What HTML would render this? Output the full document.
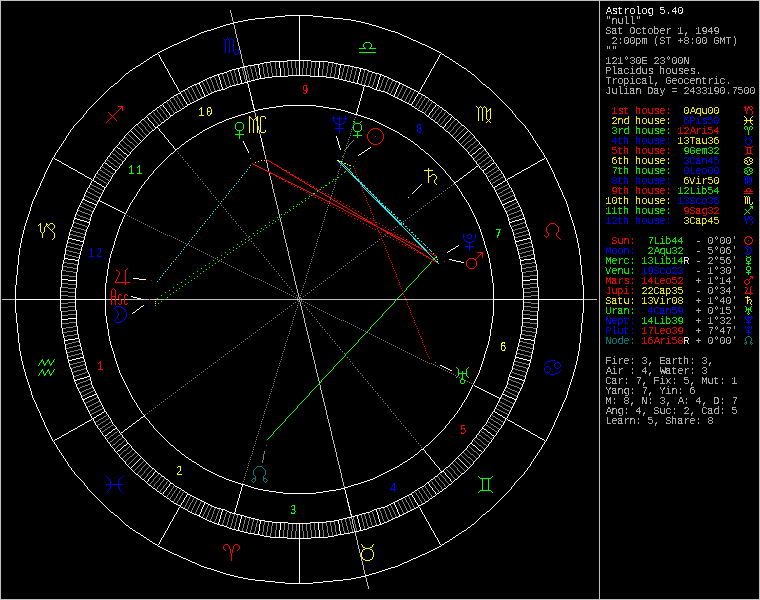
<!DOCTYPE html>
<html><head><meta charset="utf-8"><title>Astrolog 5.40 chart</title>
<style>html,body{margin:0;padding:0;background:#000;overflow:hidden}svg{display:block}
.t{font-family:"Liberation Mono",monospace;font-size:10.6px;white-space:pre}
.d{font-family:"Liberation Mono",monospace;font-size:13.2px}</style></head>
<body><svg width="760" height="600" viewBox="0 0 760 600">
<defs>
<filter id="twhite" x="0" y="0" width="760" height="600" filterUnits="userSpaceOnUse" color-interpolation-filters="sRGB"><feColorMatrix type="matrix" values="0 0 0 0 1 0 0 0 0 1 0 0 0 0 1 0 0 0 1 0"/><feComponentTransfer><feFuncA type="discrete" tableValues="0 0 .9 .9"/></feComponentTransfer></filter>
<filter id="tlite" x="0" y="0" width="760" height="600" filterUnits="userSpaceOnUse" color-interpolation-filters="sRGB"><feColorMatrix type="matrix" values="0 0 0 0 0.7529 0 0 0 0 0.7529 0 0 0 0 0.7529 0 0 0 1 0"/><feComponentTransfer><feFuncA type="discrete" tableValues="0 0 .9 .9"/></feComponentTransfer></filter>
<filter id="tred" x="0" y="0" width="760" height="600" filterUnits="userSpaceOnUse" color-interpolation-filters="sRGB"><feColorMatrix type="matrix" values="0 0 0 0 1 0 0 0 0 0 0 0 0 0 0 0 0 0 1 0"/><feComponentTransfer><feFuncA type="discrete" tableValues="0 0 .9 .9"/></feComponentTransfer></filter>
<filter id="tgreen" x="0" y="0" width="760" height="600" filterUnits="userSpaceOnUse" color-interpolation-filters="sRGB"><feColorMatrix type="matrix" values="0 0 0 0 0 0 0 0 0 1 0 0 0 0 0 0 0 0 1 0"/><feComponentTransfer><feFuncA type="discrete" tableValues="0 0 .9 .9"/></feComponentTransfer></filter>
<filter id="tyellow" x="0" y="0" width="760" height="600" filterUnits="userSpaceOnUse" color-interpolation-filters="sRGB"><feColorMatrix type="matrix" values="0 0 0 0 1 0 0 0 0 1 0 0 0 0 0 0 0 0 1 0"/><feComponentTransfer><feFuncA type="discrete" tableValues="0 0 .9 .9"/></feComponentTransfer></filter>
<filter id="tblue" x="0" y="0" width="760" height="600" filterUnits="userSpaceOnUse" color-interpolation-filters="sRGB"><feColorMatrix type="matrix" values="0 0 0 0 0 0 0 0 0 0 0 0 0 0 1 0 0 0 1 0"/><feComponentTransfer><feFuncA type="discrete" tableValues="0 0 .9 .9"/></feComponentTransfer></filter>
<filter id="tdkcyan" x="0" y="0" width="760" height="600" filterUnits="userSpaceOnUse" color-interpolation-filters="sRGB"><feColorMatrix type="matrix" values="0 0 0 0 0 0 0 0 0 0.502 0 0 0 0 0.502 0 0 0 1 0"/><feComponentTransfer><feFuncA type="discrete" tableValues="0 0 .9 .9"/></feComponentTransfer></filter>
<filter id="dred" x="0" y="0" width="760" height="600" filterUnits="userSpaceOnUse" color-interpolation-filters="sRGB"><feColorMatrix type="matrix" values="0 0 0 0 1 0 0 0 0 0 0 0 0 0 0 0 0 0 1 0"/><feComponentTransfer><feFuncA type="discrete" tableValues="0 0 1 1"/></feComponentTransfer></filter>
<filter id="dgreen" x="0" y="0" width="760" height="600" filterUnits="userSpaceOnUse" color-interpolation-filters="sRGB"><feColorMatrix type="matrix" values="0 0 0 0 0 0 0 0 0 1 0 0 0 0 0 0 0 0 1 0"/><feComponentTransfer><feFuncA type="discrete" tableValues="0 0 1 1"/></feComponentTransfer></filter>
<filter id="dyellow" x="0" y="0" width="760" height="600" filterUnits="userSpaceOnUse" color-interpolation-filters="sRGB"><feColorMatrix type="matrix" values="0 0 0 0 1 0 0 0 0 1 0 0 0 0 0 0 0 0 1 0"/><feComponentTransfer><feFuncA type="discrete" tableValues="0 0 1 1"/></feComponentTransfer></filter>
<filter id="dblue" x="0" y="0" width="760" height="600" filterUnits="userSpaceOnUse" color-interpolation-filters="sRGB"><feColorMatrix type="matrix" values="0 0 0 0 0 0 0 0 0 0 0 0 0 0 1 0 0 0 1 0"/><feComponentTransfer><feFuncA type="discrete" tableValues="0 0 1 1"/></feComponentTransfer></filter>
</defs>
<rect width="760" height="600" fill="#000"/>
<g fill="none" stroke-width="1" shape-rendering="crispEdges" transform="translate(0 .5)">
<path stroke="#ffffff" d="M285 15h28m-38 1h10m28 0h10m-58 1h10m48 0h10m-78 1h10m68 0h10m-95 1h7m88 0h8m-108 1h5m103 0h5m-118 1h5m113 0h5m-127 1h4m123 0h4m-135 1h4m131 0h4m-143 1h4m139 0h3m-149 1h3m146 0h4m-156 1h3m153 0h3m-162 1h3m159 0h3m-168 1h3m165 0h3m-174 1h3m171 0h3m-181 1h4m177 0h3m-187 1h3m184 0h4m-194 1h3m191 0h3m-199 1h2m197 0h2m-203 1h2m201 0h2m-207 1h2m205 0h2m-212 1h3m209 0h3m-217 1h2m215 0h2m-221 1h2m219 0h2m-225 1h2m223 0h2m-230 1h3m227 0h3m-235 1h2m233 0h2m-239 1h2m237 0h2m-243 1h2m241 0h2m-248 1h3m245 0h3m-253 1h2m251 0h2m-257 1h2m255 0h2m-261 1h2m259 0h2m-265 1h2m263 0h2m-269 1h2m267 0h2m-273 1h2m271 0h2m-277 1h2m275 0h2m-281 1h2m279 0h2m-286 2h2m285 0h2m-291 1h2m290 1h2m-297 1h2m295 0h2m-302 2h2m301 0h2m-165 1h24m-167 1h2m124 0h17m24 0h17m125 0h2m-191 1h6m58 0h6m-193 1h2m117 0h4m70 0h4m118 0h2m-204 1h6m78 0h6m-206 1h2m108 0h6m90 0h6m109 0h2m-325 1h2m106 0h4m102 0h4m-114 1h4m110 0h5m103 0h2m-331 1h2m101 0h4m119 0h4m101 0h2m-234 1h4m127 0h4m-237 1h2m97 0h3m135 0h2m-142 1h2m140 0h3m96 0h2m-246 1h3m145 0h3m-249 1h2m92 0h4m151 0h4m-162 1h3m159 0h3m90 0h2m-260 1h3m71 0h22m72 0h2m-172 1h2m58 0h16m22 0h16m58 0h3m-178 1h3m53 0h7m54 0h8m53 0h2m-182 1h2m50 0h6m69 0h5m50 0h2m-186 1h2m48 0h4m80 0h4m48 0h2m-190 1h2m46 0h4m88 0h4m46 0h2m-194 1h2m44 0h4m96 0h4m44 0h3m-199 1h2m43 0h4m103 0h4m43 0h2m-285 1h2m80 0h3m40 0h4m111 0h4m40 0h3m-208 1h3m39 0h4m119 0h3m40 0h2m79 0h2m-293 1h2m38 0h4m126 0h4m38 0h2m-295 1h2m77 0h2m37 0h3m134 0h4m36 0h2m-220 1h2m37 0h2m141 0h2m36 0h2m77 0h2m-264 1h2m145 0h2m36 0h2m-227 1h2m34 0h4m149 0h3m35 0h2m-231 1h2m32 0h4m156 0h4m33 0h2m-235 1h2m31 0h3m164 0h4m31 0h2m-206 1h2m171 0h2m-209 1h3m29 0h2m175 0h2m29 0h3m-245 1h2m30 0h2m179 0h2m30 0h2m-249 1h2m30 0h2m183 0h2m30 0h2m-221 1h2m187 0h2m-224 1h2m29 0h2m191 0h2m29 0h2m-228 1h2m195 0h2m-201 1h2m199 0h2m-234 1h2m27 0h2m203 0h2m27 0h2m-238 1h2m207 0h2m-241 1h2m26 0h2m211 0h2m26 0h2m-245 1h2m215 0h2m-222 1h3m219 0h3m-252 1h2m121 0h33m121 0h2m-254 1h2m89 0h7m33 0h7m89 0h2m-257 1h2m110 0h7m47 0h6m111 0h2m-260 1h2m79 0h6m60 0h7m79 0h2m-159 1h5m73 0h5m-188 1h2m24 0h2m73 0h4m83 0h4m73 0h2m24 0h2m-269 1h2m72 0h3m91 0h3m72 0h2m-247 1h2m71 0h3m97 0h3m71 0h2m-275 1h2m94 0h3m103 0h3m-113 1h4m109 0h4m91 0h2m-281 1h3m65 0h3m117 0h3m-126 1h3m123 0h3m63 0h2m-197 1h3m129 0h3m-138 1h3m135 0h3m-228 1h2m22 0h2m58 0h3m141 0h3m58 0h2m22 0h2m-233 1h2m147 0h2m-153 1h2m151 0h2m-215 1h2m55 0h3m155 0h2m56 0h2m-220 1h2m160 0h2m-245 1h2m77 0h2m164 0h2m-225 1h2m53 0h2m168 0h2m77 0h2m-253 1h2m172 0h2m53 0h2m-287 1h3m51 0h2m176 0h2m53 0h2m-237 1h2m180 0h2m-186 1h2m184 0h2m-241 1h2m49 0h2m188 0h2m0 1h2m49 0h2m-248 1h2m195 0h2m-202 2h2m201 0h2m-208 2h2m207 0h2m-213 1h2m211 0h2m-218 2h2m217 0h2m-224 2h2m223 0h2m-231 3h2m231 0h2m-299 4h2m57 0h2m189 0h2m109 0h2m-306 1h2m244 0h2m-58 1h2m-5 2h2m-240 1h2m45 0h2m253 0h2m45 0h2m-116 1h2m-234 1h2m341 0h2m-417 4h2m485 0h2m-487 1h2m481 0h2m-483 1h2m477 0h2m-478 2h2m41 0h2m385 0h2m41 0h2m-473 1h2m467 0h2m-469 1h2m463 0h2m-424 1h2m365 0h2m10 0h2m-421 1h2m457 0h2m-459 1h2m453 0h2m-455 1h2m38 0h2m357 0h2m10 0h2m38 0h2m-451 1h2m38 0h2m365 0h2m38 0h2m-446 2h2m388 0h2m49 0h2m-441 1h2m435 0h2m-437 1h2m431 0h2m-53 1h2m-381 1h2m425 0h2m-427 1h2m421 0h2m-423 1h2m369 0h2m46 0h2m-418 2h2m411 0h2m-413 1h2m360 0h2m45 0h2m-51 1h2m-359 1h2m401 0h2m-403 1h2m397 0h2m-398 2h2m391 0h2m-393 1h2m387 0h2m-413 12h3m429 0h3m-432 1h2m11 0h2m412 0h2m-427 1h2m11 0h2m407 0h3m-423 1h3m10 0h2m403 0h2m-417 1h2m10 0h2m399 0h2m-413 1h3m9 0h2m394 0h3m-397 1h2m0 1h2m0 1h2m0 1h2m0 1h2m0 1h2m0 1h2m0 1h2m0 1h2m-52 5h3m445 0h3m-448 1h3m439 0h3m-442 1h4m431 0h4m-435 1h3m425 0h3m-428 1h3m419 0h3m-444 16h4m455 0h4m-459 1h4m447 0h4m-451 1h4m439 0h4m-443 1h4m431 0h4m-63 5h2m-5 2h2m-4 1h2m-5 2h2m-386 7h4m463 0h4m-467 1h7m374 0h3m72 0h7m-456 1h4m373 0h4m64 0h4m-68 1h5m0 1h3m-331 16h6m-78 1h7m71 0h7m384 0h8m-470 1h9m445 0h8m-399 16h2m0 1h4m0 1h4m-126 1h91m35 0h3m349 0h91m-443 7h2m-6 3h2m-6 3h2m-67 6h9m445 0h8m-469 1h7m462 0h8m-463 19h4m441 0h4m-456 1h7m449 0h7m-467 1h4m463 0h4m-455 17h4m431 0h4m-443 1h4m439 0h4m-451 1h4m447 0h4m-459 1h4m455 0h4m-91 5h2m0 1h2m0 1h2m0 1h2m0 1h2m0 1h2m-365 6h3m419 0h3m-428 1h3m425 0h3m-435 1h4m431 0h4m-442 1h3m439 0h3m-448 1h3m445 0h3m-50 6h2m0 1h2m0 1h2m0 1h2m0 1h2m0 1h2m0 1h2m0 1h2m-397 1h3m394 0h2m9 0h3m-413 1h2m399 0h2m10 0h2m-418 1h3m403 0h2m10 0h2m-422 1h2m408 0h2m10 0h3m-427 1h2m412 0h2m11 0h2m-432 1h3m429 0h3m-413 12h2m387 0h2m-393 1h2m391 0h2m-398 2h2m397 0h2m-403 1h2m401 0h2m-359 1h2m-51 1h2m45 0h2m360 0h2m-413 1h2m411 0h2m-418 2h2m46 0h2m369 0h2m-423 1h2m421 0h2m-427 1h2m425 0h2m-381 1h2m-53 1h2m431 0h2m-437 1h2m435 0h2m-441 1h2m49 0h2m388 0h2m-446 2h2m38 0h2m365 0h2m38 0h2m-451 1h2m38 0h2m10 0h2m357 0h2m38 0h2m-455 1h2m453 0h2m-459 1h2m457 0h2m-421 1h2m10 0h2m365 0h2m-424 1h2m463 0h2m-469 1h2m467 0h2m-473 1h2m41 0h2m385 0h2m41 0h2m-478 2h2m477 0h2m-483 1h2m481 0h2m-487 1h2m485 0h2m-417 4h2m341 0h2m-348 2h2m45 0h2m253 0h2m45 0h2m-54 4h3m-306 1h2m57 0h2m300 0h2m-299 4h2m231 0h2m-231 3h2m223 0h2m-224 2h2m217 0h2m-218 2h2m211 0h2m-213 1h2m207 0h2m-208 2h2m201 0h2m-202 2h2m195 0h2m-4 1h2m49 0h2m-296 1h2m49 0h2m188 0h2m-190 1h2m184 0h2m-186 1h2m180 0h2m-236 1h2m52 0h2m176 0h2m52 0h3m-233 1h2m172 0h2m53 0h2m-284 1h2m53 0h2m168 0h2m77 0h2m-328 1h2m77 0h2m164 0h2m-166 1h2m160 0h2m-219 1h2m55 0h3m155 0h2m56 0h2m-215 1h2m151 0h2m-153 1h2m147 0h2m-233 1h2m22 0h2m58 0h3m141 0h3m58 0h2m22 0h2m-228 1h3m135 0h3m-138 1h3m129 0h3m-132 1h3m123 0h3m63 0h2m-259 1h3m65 0h3m117 0h3m-120 1h4m109 0h4m91 0h2m-302 1h2m94 0h3m103 0h3m-179 1h2m71 0h3m97 0h3m71 0h2m-247 1h2m72 0h3m91 0h3m72 0h2m-269 1h2m24 0h2m73 0h4m83 0h4m73 0h2m24 0h2m-188 1h5m73 0h5m-159 1h2m79 0h6m60 0h7m79 0h2m-260 1h2m110 0h7m47 0h6m111 0h2m-257 1h2m89 0h7m33 0h7m89 0h2m-254 1h2m121 0h33m121 0h2m-252 1h3m219 0h3m-222 1h2m215 0h2m-245 1h2m26 0h2m211 0h2m26 0h2m-241 1h2m207 0h2m-238 1h2m27 0h2m203 0h2m27 0h2m-234 1h2m199 0h2m-201 1h2m195 0h2m-228 1h2m29 0h2m191 0h2m29 0h2m-224 1h2m187 0h2m-221 1h2m30 0h2m183 0h2m30 0h2m-249 1h2m30 0h2m179 0h2m30 0h2m-245 1h3m29 0h2m175 0h2m29 0h3m-209 1h2m171 0h2m-206 1h2m31 0h3m164 0h4m31 0h2m-235 1h2m32 0h4m156 0h4m33 0h2m-231 1h2m34 0h4m149 0h3m35 0h2m-189 1h2m145 0h2m36 0h2m-224 1h2m37 0h2m141 0h2m36 0h2m77 0h2m-378 1h2m77 0h2m37 0h3m134 0h4m36 0h2m-216 1h2m38 0h4m126 0h4m38 0h2m-212 1h3m39 0h4m119 0h3m40 0h2m79 0h2m-370 1h2m80 0h3m40 0h4m111 0h4m40 0h3m-203 1h2m43 0h3m104 0h4m43 0h2m-199 1h2m44 0h4m96 0h4m44 0h3m-195 1h2m46 0h4m88 0h4m46 0h2m-190 1h2m48 0h4m80 0h4m48 0h2m-186 1h2m50 0h6m69 0h5m50 0h2m-182 1h3m53 0h7m54 0h8m53 0h2m-177 1h2m58 0h16m22 0h16m58 0h3m-173 1h3m71 0h22m72 0h2m-167 1h3m159 0h3m90 0h2m-348 1h2m92 0h4m151 0h4m-155 1h3m145 0h3m-148 1h2m140 0h3m96 0h2m-340 1h2m97 0h3m135 0h2m-137 1h4m127 0h4m-234 1h2m101 0h4m119 0h4m101 0h2m-226 1h4m110 0h5m103 0h2m-328 1h2m106 0h4m102 0h4m-216 1h2m108 0h6m90 0h6m109 0h2m-207 1h6m78 0h6m-203 1h2m117 0h4m70 0h4m118 0h2m-194 1h6m58 0h6m-190 1h2m124 0h17m24 0h17m125 0h2m-168 1h24m-164 1h2m301 0h2m-302 2h2m295 0h2m-4 1h2m-294 1h2m0 1h2m285 0h2m-286 2h2m279 0h2m-281 1h2m275 0h2m-277 1h2m271 0h2m-273 1h2m267 0h2m-269 1h2m263 0h2m-265 1h2m259 0h2m-261 1h2m255 0h2m-257 1h2m251 0h2m-253 1h3m245 0h3m-248 1h2m241 0h2m-243 1h2m237 0h2m-239 1h2m233 0h2m-235 1h3m227 0h3m-230 1h2m223 0h2m-225 1h2m219 0h2m-221 1h2m215 0h2m-217 1h3m209 0h3m-212 1h2m205 0h2m-207 1h2m201 0h2m-203 1h2m197 0h2m-199 1h3m191 0h3m-194 1h3m184 0h4m-188 1h4m177 0h3m-180 1h3m171 0h3m-174 1h3m165 0h3m-168 1h3m159 0h3m-162 1h3m153 0h3m-156 1h3m146 0h4m-150 1h4m139 0h3m-142 1h4m131 0h4m-135 1h4m123 0h4m-127 1h5m113 0h5m-118 1h5m103 0h5m-108 1h7m88 0h8m-96 1h10m68 0h10m-78 1h10m48 0h10m-58 1h10m28 0h10m-38 1h28"/>
<path stroke="#c0c0c0" d="M0 0h760m-758 299h13m91 0h5m1 0h3m1 0h3m2 0h3m1 0h16m3 0h5m1 0h5m1 0h8m1 0h134m1 0h96m1 0h96m91 0h13m-597 300h760"/>
<path stroke="#808080" d="M468 141h2m-340 1h2m339 2h2m-346 1h2m217 2h2m126 0h2m-352 1h2m353 5h2m-368 1h2m4 0h2m363 0h2m-376 3h2m375 0h2m-370 2h2m357 0h2m-373 1h2m5 0h2m367 0h2m5 0h2m-381 3h2m5 0h2m359 0h2m5 0h2m-373 3h2m365 0h2m-382 1h2m391 0h2m-392 2h2m385 0h2m-394 1h2m395 0h2m-391 1h2m379 0h2m-388 1h2m389 0h2m-385 1h2m373 0h2m-390 1h2m6 0h2m383 0h2m6 0h2m-400 2h2m6 0h2m377 0h2m6 0h2m-402 1h2m5 0h2m389 0h2m5 0h2m-404 2h2m5 0h2m383 0h2m5 0h2m-399 1h2m393 0h2m-394 2h2m387 0h2m-403 3h2m411 0h2m-413 1h2m407 0h2m-409 1h2m403 0h2m-413 1h2m6 0h2m399 0h2m6 0h2m-417 1h2m6 0h2m395 0h2m6 0h2m-4 1h2m-410 1h2m413 0h2m-424 1h2m7 0h2m401 0h2m6 0h2m-420 1h2m7 0h2m397 0h2m6 0h2m-416 1h2m410 0h2m-412 1h2m406 0h2m8 0h2m-428 1h2m8 0h2m402 0h2m8 0h2m-424 1h2m8 0h2m408 0h2m-420 1h2m414 0h2m-416 1h2m410 0h2m-412 1h2m406 0h2m-408 1h2m-15 2h2m429 0h2m-431 1h2m425 0h2m-427 1h2m421 0h2m-432 1h2m7 0h2m417 0h2m7 0h2m-437 1h2m7 0h2m413 0h2m7 0h2m-433 1h2m426 0h3m-429 1h3m421 0h2m-434 1h2m9 0h2m417 0h2m9 0h2m-441 1h2m9 0h2m413 0h2m9 0h2m-437 1h3m429 0h3m-432 1h3m423 0h3m-438 1h2m10 0h2m419 0h2m10 0h2m-445 1h2m439 0h2m-441 1h3m433 0h3m-436 1h3m427 0h3m-430 1h2m423 0h2m-425 1h2m419 0h2m-437 3h2m447 0h2m-449 1h3m441 0h3m-444 1h3m435 0h3m-438 1h3m429 0h3m-432 1h2m425 0h2m-440 1h3m445 0h3m-448 1h4m437 0h4m-441 1h3m431 0h3m-447 1h2m11 0h2m427 0h2m11 0h2m-455 1h3m447 0h3m-450 1h4m439 0h4m-443 1h3m433 0h3m-449 1h3m10 0h2m429 0h2m10 0h3m-456 1h4m445 0h4m-449 1h4m437 0h4m-441 1h3m431 0h3m-450 5h3m457 0h3m-460 1h4m449 0h4m-453 1h4m441 0h4m-445 1h3m435 0h3m-453 1h3m459 0h3m-462 1h4m451 0h4m-455 1h4m443 0h4m-447 1h3m437 0h3m-455 1h3m461 0h3m-464 1h4m453 0h4m-457 1h4m445 0h4m-449 1h3m439 0h3m-457 1h3m463 0h3m-466 1h4m455 0h4m-459 1h4m447 0h4m-451 1h3m441 0h3m-459 5h3m465 0h3m-468 1h7m451 0h7m-458 1h4m443 0h4m-462 2h4m465 0h4m-469 1h6m453 0h6m-459 1h4m445 0h4m-464 2h4m467 0h4m-471 1h7m453 0h7m-460 1h3m447 0h3m-464 3h7m461 0h7m-468 1h7m447 0h7m-468 7h6m462 0h7m-469 1h8m447 0h7m-469 3h7m462 0h8m-470 1h7m449 0h6m-469 3h7m463 0h7m-470 1h7m449 0h7m-470 3h7m463 0h7m-470 1h7m449 0h7m-463 6h7m449 0h7m-470 1h7m463 0h7m-470 3h7m449 0h7m-470 1h7m463 0h7m-470 3h8m447 0h7m-468 1h6m462 0h7m-469 3h8m447 0h7m-468 1h6m462 0h7m-468 7h7m447 0h7m-468 1h7m461 0h7m-464 3h4m445 0h4m-460 1h7m453 0h7m-470 1h3m467 0h3m-463 2h4m445 0h4m-459 1h6m453 0h6m-469 1h4m465 0h4m-462 2h4m443 0h4m-458 1h7m451 0h7m-468 1h3m465 0h3m-459 5h3m441 0h3m-451 1h4m447 0h4m-459 1h4m455 0h4m-465 1h2m463 0h2m-456 1h3m439 0h3m-449 1h4m445 0h4m-457 1h4m453 0h4m-464 1h3m461 0h3m-455 1h3m437 0h3m-447 1h4m443 0h4m-455 1h4m451 0h4m-462 1h3m459 0h3m-453 1h3m435 0h3m-445 1h4m441 0h4m-453 1h4m449 0h4m-460 1h3m457 0h3m-450 5h3m431 0h3m-441 1h4m437 0h4m-449 1h4m445 0h4m-456 1h3m10 0h2m429 0h2m10 0h3m-449 1h3m433 0h3m-443 1h4m439 0h4m-450 1h3m447 0h3m-455 1h2m11 0h2m427 0h2m11 0h2m-447 1h3m431 0h3m-441 1h4m437 0h4m-448 1h3m445 0h3m-440 1h2m425 0h2m-432 1h3m429 0h3m-438 1h3m435 0h3m-444 1h3m441 0h3m-449 1h2m447 0h2m-437 3h2m419 0h2m-425 1h2m423 0h2m-430 1h3m427 0h3m-436 1h3m433 0h3m-441 1h2m439 0h2m-433 1h2m419 0h2m-426 1h3m423 0h3m-432 1h3m429 0h3m-437 1h2m9 0h2m413 0h2m9 0h2m-441 1h2m9 0h2m417 0h2m9 0h2m-435 1h3m421 0h2m-428 1h2m426 0h3m-433 1h2m7 0h2m413 0h2m7 0h2m-437 1h2m7 0h2m417 0h2m7 0h2m-432 1h2m421 0h2m-427 1h2m425 0h2m-431 1h2m429 0h2m-420 2h2m-4 1h2m406 0h2m-412 1h2m410 0h2m-416 1h2m414 0h2m-420 1h2m8 0h2m408 0h2m-424 1h2m8 0h2m402 0h2m8 0h2m-418 1h2m406 0h2m8 0h2m-422 1h2m410 0h2m-416 1h2m7 0h2m397 0h2m6 0h2m-420 1h2m7 0h2m401 0h2m6 0h2m-415 1h2m413 0h2m-9 1h2m-413 1h2m6 0h2m395 0h2m6 0h2m-417 1h2m6 0h2m399 0h2m6 0h2m-413 1h2m403 0h2m-409 1h2m407 0h2m-413 1h2m411 0h2m-403 3h2m387 0h2m-394 2h2m393 0h2m-399 1h2m5 0h2m383 0h2m5 0h2m-404 2h2m5 0h2m389 0h2m5 0h2m-402 1h2m6 0h2m377 0h2m6 0h2m-400 2h2m6 0h2m383 0h2m6 0h2m-390 1h2m373 0h2m-385 1h2m389 0h2m-388 1h2m379 0h2m-391 1h2m395 0h2m-394 1h2m385 0h2m-392 2h2m391 0h2m-382 1h2m365 0h2m-373 3h2m5 0h2m359 0h2m5 0h2m-381 3h2m5 0h2m367 0h2m5 0h2m-373 1h2m357 0h2m-370 2h2m375 0h2m-376 3h2m4 0h2m363 0h2m-7 1h2m-357 5h2m348 1h2m-349 2h2m342 1h2m-343 2h2m336 1h2"/>
<path stroke="#ff0000" d="M118 106h5m627 0h2m-631 1h2m621 0h2m2 0h2m0 2h2m-379 19h5m-7 1h2m5 0h2m-9 14h2m5 0h2m-7 1h5m368 3h6m-6 6h6m-485 7h2m0 1h2m1 2h2m-21 1h2m19 0h2m-21 1h2m19 0h2m-21 1h2m18 0h2m-20 1h2m18 0h2m-20 1h2m0 1h2m17 0h2m-19 1h2m17 0h3m-20 1h2m0 1h2m16 0h3m-20 1h3m0 1h2m15 0h3m-18 1h2m15 0h2m-18 1h3m15 0h2m-17 1h2m14 0h2m-16 1h2m14 0h2m-17 1h3m0 1h2m13 0h2m-15 1h2m13 0h3m-17 1h3m0 1h2m12 0h2m-14 1h2m12 0h2m-14 1h2m0 1h2m11 0h2m-13 1h2m11 0h2m-13 1h2m444 0h3m-447 1h2m10 0h2m-12 1h2m0 1h2m435 0h4m1 0h4m-444 1h2m9 0h2m-11 1h2m9 0h2m420 0h9m-440 1h2m0 1h2m8 0h2m-10 1h2m8 0h2m-10 1h2m0 1h2m7 0h2m-9 1h2m0 1h2m6 0h2m-8 1h2m6 0h2m-8 1h2m0 1h2m5 0h2m-7 1h2m5 0h2m-7 1h2m0 1h2m4 0h2m-6 1h2m4 0h2m-6 1h2m5 1h2m-6 1h2m4 0h2m-6 1h2m0 1h2m3 0h2m-5 1h2m3 0h2m-5 1h2m0 1h2m2 0h2m-4 1h2m2 0h2m-4 1h2m0 1h2m1 0h2m-3 1h2m1 0h2m-3 1h2m7 0h2m-9 1h4m-2 1h4m3 0h2m-7 1h3m177 0h5m-183 1h3m-1 1h2m0 1h2m0 1h2m0 1h2m-1 1h3m-1 1h3m-1 1h3m-2 1h4m-2 1h4m0 1h2m-3 1h2m1 0h2m-3 1h2m1 0h2m349 0h3m-352 1h2m345 0h2m3 0h2m-356 1h2m2 0h2m-4 1h2m2 0h2m0 1h2m-5 1h2m3 0h2m-5 1h2m3 0h2m0 1h2m333 0h2m3 0h2m-346 1h2m4 0h2m333 0h3m-342 1h2m4 0h2m0 1h3m-8 1h2m5 0h2m-7 1h2m5 0h2m0 1h2m-8 1h2m1 2h2m7 0h2m47 0h6m-63 1h3m7 0h2m49 0h2m-51 1h2m-11 1h3m8 0h2m-10 1h2m1 2h2m38 0h5m-43 1h2m41 0h2m-44 1h2m0 1h2m33 7h5m-358 2h2m632 6h3m-2 1h2m-7 2h2m-633 3h15m616 2h2m-3 3h2m-2 6h8m-634 1h2m4 0h2m-16 2h5m3 3h2m-2 5h2m4 0h2m98 240h3m7 0h3"/>
<path stroke="#00ff00" d="M365 42h5m-11 6h7m3 0h7m-17 4h17m-139 70h5m113 1h5m385 3h2m3 0h2m-515 4h5m113 1h5m-125 3h9m109 1h9m385 32h3m-5 1h2m3 0h2m-7 2h2m3 1h2m-7 2h2m3 0h2m-5 1h3m-413 3h2m-14 8h2m-14 8h2m435 13h3m-2 1h2m-6 50h3m-3 4h3m-4 2h5m-4 3h3m-3 4h3m-4 2h5m-5 37h5m-710 51h2m4 0h2m-5 4h2m4 0h2m-11 6h2m4 0h2m409 3h9m-423 1h2m4 0h2m409 5h3m-3 4h3m16 95h11m-11 12h11"/>
<path stroke="#ffff00" d="M489 109h2m-5 2h2m-227 5h4m-16 1h2m5 0h2m486 3h9m-492 12h4m482 25h3m-5 1h2m3 0h2m-415 2h2m406 0h2m3 1h2m-408 2h2m399 0h2m3 0h2m-5 1h3m-401 1h2m73 5h9m-1 4h3m-7 2h3m319 28h2m-702 19h3m-14 1h2m5 0h2m697 73h5m-1 2h2m-4 1h2m-386 247h2m5 0h2m-7 1h5m-7 1h2m5 0h2m-9 10h2m5 0h2m-7 1h5"/>
<path stroke="#0000ff" d="M237 50h3m-5 4h2m95 64h3m2 0h5m2 0h3m-12 5h2m5 0h2m-7 1h5m-7 4h9m403 10h3m-3 6h3m-1 34h3m-2 38h2m-8 1h2m2 0h2m0 2h2m-284 15h3m-3 4h3m-6 3h2m5 0h2m-7 1h5m-7 4h9m272 0h3m0 1h2m-2 6h2m-5 1h3m-633 52h5m0 1h2m621 10h2m1 0h3m1 0h2m-6 3h3m-629 1h2m-7 1h5m625 0h5m-4 8h3m-4 2h5m-201 28h5m-8 1h3m6 1h3m-13 4h3m7 2h3m-13 4h3m6 1h3m-8 1h5m-449 110h17"/>
<path stroke="#00ffff" d="M351 174h2m-1 1h2m-1 1h3m-2 1h2m-1 1h2m-1 1h3m-2 1h2m-1 1h2m0 1h2m-2 1h2m-1 1h2m-1 1h3m1 3h2m1 3h2m1 3h2m1 3h2m-1 3h2m-1 1h3m-2 1h2m-1 1h4m-3 1h2m-1 1h3m-2 1h2m-1 1h3m-2 1h2m-1 1h2m-1 1h2m-1 1h2m-1 1h2m-1 1h2m-1 1h2m1 0h2m-4 1h2m-1 1h2m-1 1h2m-1 1h2m-1 1h2m-1 1h2m1 0h2m-4 1h2m-1 1h2m-1 1h2m-1 1h2m3 2h2m4 6h2m0 6h2m2 0h2m-5 1h2m-1 1h2m-1 1h2m-1 1h2m-1 1h2m-1 1h2m-1 1h2m-1 1h2m-1 1h2m-1 1h2m-1 1h2m-1 1h2"/>
<path stroke="#008080" d="M747 336h3m-5 6h2m3 0h2m-495 124h5m-9 12h3m7 0h3"/>
</g>
<g fill="none" stroke-width="1" shape-rendering="crispEdges" transform="translate(.5 0)">
<path stroke="#ffffff" d="M15 285v14m0 1v13m1-38v10m0 28v10m1-58v10m0 48v10m1-78v10m0 68v10m1-95v7m0 88v8m1-108v5m0 103v5m1-118v5m0 113v5m1-127v4m0 123v4m1-135v4m0 131v4m1-143v4m0 139v3m1-149v3m0 146v4m1-156v3m0 153v3m1-162v3m0 159v3m1-168v3m0 165v3m1-174v3m0 171v3m1-181v4m0 177v3m1-187v3m0 184v4m1-194v3m0 191v3m1-199v2m0 197v2m1-203v2m0 201v2m1-207v2m0 205v2m1-212v3m0 209v3m1-217v2m0 215v2m1-221v2m0 219v2m1-225v2m0 223v2m1-230v3m0 227v3m1-235v2m0 233v2m1-239v2m0 237v2m1-243v2m0 241v2m1-248v3m0 245v3m1-253v2m0 251v2m1-257v2m0 255v2m1-261v2m0 259v2m1-265v2m0 263v2m1-269v2m0 267v2m1-273v2m0 271v2m1-277v2m0 275v2m1-281v2m0 279v2m1-284v1m0 283v1m1-287v2m0 1v1m0 281v1m0 1v2m1-291v2m0 289v1m1-293v1m0 292v2m1-297v2m0 295v2m1-300v1m0 299v1m1-303v2m0 301v2m1-306v1m0 140v12m0 1v11m0 141v1m1-309v2m0 16v1m0 107v9m0 1v7m0 24v8m0 1v8m0 108v1m0 16v2m1-312v1m0 120v6m0 58v6m0 121v1m1-315v2m0 117v4m0 70v4m0 118v2m1-318v1m0 113v4m0 1v1m0 78v2m0 1v3m0 114v1m1-321v2m0 108v6m0 90v6m0 109v2m1-325v2m0 106v4m0 102v4m0 107v1m1-327v1m0 104v4m0 110v5m0 103v2m1-331v2m0 31v1m0 69v2m0 1v1m0 119v1m0 1v2m0 69v1m0 31v2m1-334v1m0 99v4m0 127v4m0 99v1m1-337v2m0 97v3m0 135v2m0 98v1m1-339v1m0 97v2m0 140v3m0 96v2m1-342v1m0 95v3m0 145v3m0 95v1m1-345v2m0 92v4m0 151v4m0 92v1m1-347v1m0 91v1m0 1v1m0 159v1m0 1v1m0 90v2m1-350v1m0 89v3m0 71v11m0 1v10m0 72v2m0 90v1m1-352v1m0 88v2m0 58v8m0 1v7m0 22v8m0 1v7m0 58v3m0 88v1m1-354v1m0 48v1m0 37v3m0 53v7m0 54v8m0 53v2m0 38v1m0 48v1m1-356v1m0 85v2m0 50v1m0 1v4m0 69v4m0 51v2m0 86v1m1-358v1m0 84v2m0 48v4m0 80v4m0 48v2m0 85v1m1-360v1m0 83v2m0 46v4m0 88v4m0 46v2m0 84v1m1-362v1m0 82v2m0 44v4m0 96v4m0 44v3m0 82v1m1-364v1m0 82v1m0 43v3m0 104v4m0 43v1m0 82v1m1-367v2m0 80v2m0 41v1m0 1v2m0 111v2m0 1v1m0 41v2m0 80v1m1-369v1m0 60v1m0 18v3m0 39v4m0 119v3m0 40v2m0 19v1m0 59v2m1-372v1m0 78v2m0 38v4m0 126v4m0 38v2m0 79v1m1-375v2m0 77v2m0 37v3m0 134v4m0 36v2m0 78v1m1-377v1m0 77v2m0 37v2m0 141v2m0 36v2m0 77v2m1-380v1m0 77v1m0 37v2m0 145v2m0 36v2m0 77v1m1-382v1m0 76v2m0 34v1m0 1v2m0 149v2m0 36v2m0 76v1m1-384v1m0 75v2m0 32v4m0 156v4m0 33v2m0 75v1m1-386v1m0 72v1m0 1v2m0 31v3m0 164v4m0 31v2m0 1v1m0 72v1m1-388v1m0 106v2m0 171v2m0 106v1m1-390v1m0 73v2m0 30v2m0 175v2m0 30v2m0 73v1m1-392v1m0 72v2m0 30v2m0 179v2m0 30v2m0 72v1m1-394v1m0 71v2m0 30v2m0 183v2m0 30v2m0 71v1m1-396v1m0 71v1m0 8v1m0 22v1m0 187v1m0 22v1m0 8v1m0 71v1m1-398v1m0 70v2m0 29v2m0 191v2m0 29v2m0 70v1m1-400v1m0 70v1m0 30v1m0 195v2m0 29v1m0 70v1m1-402v1m0 70v1m0 28v2m0 199v2m0 28v1m0 70v1m1-404v1m0 69v2m0 27v2m0 203v2m0 27v2m0 69v1m1-406v1m0 69v1m0 18v1m0 8v2m0 207v2m0 8v1m0 18v1m0 69v1m1-408v1m0 68v2m0 26v2m0 211v2m0 26v2m0 68v1m1-410v1m0 68v1m0 26v2m0 215v2m0 26v1m0 68v1m1-412v1m0 68v1m0 25v2m0 219v2m0 25v1m0 68v1m1-414v1m0 67v2m0 121v16m0 1v16m0 121v2m0 67v1m1-416v1m0 67v1m0 25v2m0 89v7m0 33v7m0 89v2m0 25v1m0 67v1m1-418v1m0 66v2m0 5v1m0 19v1m0 84v7m0 47v6m0 85v1m0 19v1m0 5v2m0 66v1m1-420v1m0 66v1m0 8v1m0 16v2m0 79v6m0 60v7m0 79v2m0 16v1m0 8v1m0 66v1m1-422v1m0 66v1m0 25v1m0 76v5m0 73v5m0 76v1m0 25v1m0 66v1m1-424v1m0 65v2m0 24v2m0 73v4m0 83v4m0 73v2m0 24v2m0 65v1m1-360v1m0 14v1m0 9v2m0 72v3m0 91v3m0 72v2m0 9v1m0 14v1m1-296v1m0 16v1m0 6v2m0 71v3m0 97v3m0 71v2m0 6v1m0 16v1m1-363v1m0 63v2m0 23v1m0 70v3m0 103v3m0 70v1m0 23v1m0 64v1m1-430v1m0 63v1m0 24v1m0 67v4m0 109v4m0 67v1m0 23v2m0 63v1m1-368v1m0 23v2m0 65v3m0 117v3m0 65v1m0 24v1m1-306v1m0 88v3m0 123v3m0 63v1m0 24v1m1-371v1m0 62v1m0 1v1m0 21v1m0 62v3m0 129v3m0 62v1m0 21v1m0 1v1m0 62v1m1-436v1m0 62v1m0 23v1m0 60v3m0 135v3m0 60v1m0 23v1m0 62v1m1-438v1m0 61v2m0 22v2m0 58v3m0 141v3m0 58v2m0 22v2m0 61v1m1-440v1m0 61v1m0 7v1m0 15v1m0 58v2m0 147v2m0 58v1m0 15v1m0 7v1m0 61v1m1-442v1m0 61v1m0 9v1m0 13v1m0 57v2m0 151v2m0 57v1m0 13v1m0 9v1m0 61v1m1-444v1m0 61v1m0 11v1m0 10v2m0 55v3m0 155v2m0 56v2m0 10v1m0 11v1m0 61v1m1-446v1m0 61v1m0 13v1m0 8v1m0 55v2m0 160v2m0 50v1m0 5v1m0 8v1m0 13v1m0 61v1m1-448v1m0 60v2m0 22v1m0 54v2m0 164v2m0 47v1m0 7v1m0 22v1m0 61v1m1-450v1m0 60v1m0 22v2m0 223v2m0 54v1m0 22v2m0 60v1m1-391v1m0 19v1m0 2v1m0 53v2m0 172v2m0 53v2m0 2v1m0 19v1m1-332v1m0 22v1m0 52v2m0 176v2m0 39v1m0 13v1m0 22v1m1-394v1m0 59v1m0 74v2m0 180v2m0 36v1m0 38v1m0 59v1m1-456v1m0 59v1m0 22v1m0 50v2m0 184v2m0 51v1m0 22v1m0 59v1m1-398v1m0 21v2m0 49v2m0 188v2m0 50v1m0 22v1m1-340v1m0 1v1m0 19v1m0 50v1m0 192v2m0 28v1m0 20v2m0 19v1m0 1v1m1-401v1m0 58v1m0 3v1m0 17v1m0 49v2m0 111v1m0 83v2m0 25v1m0 23v1m0 17v1m0 3v1m0 58v1m1-403v1m0 5v1m0 15v1m0 49v1m0 199v1m0 49v1m0 15v1m0 5v1m1-346v1m0 7v1m0 13v1m0 48v2m0 201v2m0 48v1m0 13v1m0 7v1m1-406v1m0 57v1m0 9v1m0 11v1m0 48v1m0 114v1m0 90v1m0 19v1m0 28v1m0 11v1m0 9v1m0 57v1m1-396v1m0 9v1m0 47v2m0 114v1m0 92v2m0 16v1m0 30v1m0 9v1m1-326v1m0 7v1m0 46v2m0 211v2m0 46v1m0 7v1m1-339v1m0 14v1m0 5v1m0 46v1m0 215v1m0 46v1m0 5v1m0 14v1m1-354v1m0 16v1m0 3v1m0 45v2m0 117v1m0 99v2m0 9v1m0 35v1m0 3v1m0 16v1m1-413v1m0 56v1m0 18v1m0 1v1m0 45v1m0 118v1m0 102v1m0 7v1m0 37v1m0 1v1m0 18v1m0 56v1m1-415v1m0 20v1m0 44v2m0 223v2m0 44v1m0 20v1m1-339v1m0 44v1m0 227v1m0 44v1m1-397v1m0 76v1m0 44v1m0 120v1m0 108v1m0 44v1m0 76v1m1-419v1m0 19v1m0 43v2m0 231v1m0 44v1m0 19v1m1-364v1m0 19v1m0 43v1m0 235v1m0 43v1m0 19v1m1-422v1m0 55v1m0 19v1m0 43v1m0 237v1m0 43v1m0 19v1m0 55v1m1-424v1m0 1v1m0 17v1m0 43v1m0 239v1m0 43v1m0 17v1m0 1v1m1-370v1m0 3v2m0 14v1m0 42v2m0 241v1m0 43v1m0 14v2m0 3v1m1-427v1m0 61v1m0 12v1m0 42v1m0 244v2m0 42v1m0 12v1m0 61v1m1-420v1m0 10v1m0 42v1m0 247v1m0 42v1m0 10v1m1-366v1m0 9v1m0 8v1m0 42v1m0 249v1m0 42v1m0 8v1m0 9v1m1-431v1m0 54v1m0 11v1m0 49v1m0 251v1m0 49v1m0 11v1m0 54v1m1-419v2m0 45v2m0 253v2m0 45v2m1-349v1m0 2v1m0 40v1m0 257v1m0 40v1m0 2v1m1-364v1m0 18v1m0 40v1m0 259v1m0 40v1m0 18v1m1-382v1m0 59v1m0 261v1m0 59v1m1-438v1m0 72v1m0 40v1m0 263v1m0 40v1m0 72v1m1-492v1m0 73v1m0 37v1m0 265v1m0 111v1m1-490v2m0 49v1m0 22v2m0 34v1m0 267v1m0 58v1m0 49v2m1-487v2m0 65v1m0 6v1m0 32v1m0 269v1m0 39v1m0 65v2m1-483v2m0 62v1m0 8v1m0 30v1m0 271v1m0 39v1m0 62v2m1-479v1m0 42v1m0 28v1m0 28v1m0 273v1m0 57v1m0 42v1m1-476v2m0 39v1m0 1v2m0 27v1m0 26v1m0 275v1m0 54v2m0 1v1m0 39v2m1-473v2m0 41v1m0 13v1m0 13v2m0 23v1m0 277v1m0 38v1m0 13v1m0 41v2m1-469v2m0 40v1m0 11v1m0 16v1m0 21v1m0 279v1m0 38v1m0 11v1m0 40v2m1-465v1m0 32v1m0 7v2m0 27v1m0 19v1m0 281v1m0 47v2m0 7v1m0 32v1m1-462v2m0 40v1m0 27v1m0 17v1m0 283v1m0 45v1m0 40v2m1-459v2m0 39v1m0 5v1m0 21v2m0 14v1m0 285v1m0 37v1m0 5v1m0 39v2m1-455v2m0 24v1m0 13v2m0 2v1m0 24v1m0 12v1m0 287v1m0 37v1m0 2v2m0 13v1m0 24v2m1-451v2m0 21v1m0 17v1m0 26v1m0 10v1m0 289v1m0 37v1m0 17v1m0 21v2m1-447v1m0 66v1m0 376v1m1-444v2m0 65v1m0 373v2m1-441v2m0 14v1m0 17v1m0 31v2m0 4v1m0 293v1m0 37v1m0 17v1m0 14v2m1-437v2m0 29v1m0 34v1m0 2v1m0 295v1m0 37v1m0 29v2m1-433v1m0 65v1m0 297v1m0 65v1m1-430v2m0 362v1m0 62v2m1-427v2m0 421v2m1-423v2m0 417v2m1-419v1m0 55v1m0 303v1m0 55v1m1-416v1m0 53v1m0 305v1m0 53v1m1-413v2m0 13v1m0 35v1m0 307v1m0 35v1m0 13v2m1-409v1m0 405v1m1-406v2m0 401v2m1-403v2m0 6v1m0 35v1m0 311v1m0 35v1m0 6v2m1-399v1m0 40v1m0 313v1m0 40v1m1-396v2m0 391v2m1-409v1m0 16v1m0 387v1m0 16v1m1-371v1m0 317v1m3-321v1m0 321v1m5-326v1m0 327v1m3-380v1m0 48v1m0 331v1m0 48v1m1-430v2m0 425v2m1-427v2m0 420v3m1-423v3m0 39v1m0 335v1m0 39v2m1-417v2m0 411v2m1-413v2m0 407v2m14-430v2m0 445v2m1-447v3m0 439v3m1-442v4m0 431v4m1-435v3m0 425v3m1-428v2m0 421v2m12 0v1m1-5v4m1-7v3m1-7v4m1-436v3m0 426v3m0 26v3m1-458v4m0 418v4m0 25v4m1-451v4m0 411v3m0 25v4m1-443v3m0 404v4m0 25v3m1-34v2m1-346v2m1 0v2m1 0v2m1 0v2m1-66v1m0 65v2m1-67v4m0 63v2m1-65v4m1 0v4m1 0v4m1 0v4m1 0v4m1 0v2m4-45v3m0 463v3m1-466v7m0 449v7m1-456v3m0 58v2m0 383v3m1-386v4m1 0v4m1 0v3m16-87v6m0 462v7m1-469v8m0 447v7m19-514v44m0 1v14m0 449v14m0 1v44m19-515v8m0 447v7m1-468v6m0 462v7m17-401v2m1 0v3m1-66v3m0 63v4m0 376v3m1-456v7m0 70v3m0 376v7m1-466v3m0 80v2m0 381v3m4-45v1m1 0v4m1 0v4m1 0v4m1 0v4m1 0v4m1 0v4m1 0v2m5-404v2m1-34v3m0 25v4m0 404v3m1-443v4m0 25v3m0 47v1m0 363v4m1-451v4m0 25v4m0 418v4m1-458v3m0 26v3m0 426v3m1-436v4m0 55v1m1-63v3m1-7v4m1-5v1m0 64v1m3-3v1m3-3v1m6-61v2m0 421v2m1-428v3m0 425v3m1-435v4m0 431v4m1-442v3m0 439v3m1-447v2m0 445v2m14-430v2m0 407v2m1-413v2m0 411v2m1-418v3m0 415v2m1-422v2m0 420v3m1-427v2m0 425v2m1-430v1m0 48v1m0 331v1m0 48v1m3-380v1m0 327v1m5-326v1m0 321v1m3-321v1m0 317v1m1-354v1m0 387v1m1-392v2m0 89v1m0 301v2m1-396v1m0 40v1m0 49v1m0 263v1m0 40v1m1-399v2m0 6v1m0 35v1m0 47v1m0 263v1m0 35v1m0 6v2m1-403v2m0 91v1m0 309v2m1-406v1m0 92v1m0 312v1m1-409v2m0 13v1m0 35v1m0 42v1m0 264v1m0 35v1m0 13v2m1-413v1m0 53v1m0 40v1m0 264v1m0 53v1m1-416v1m0 55v1m0 38v1m0 264v1m0 55v1m1-419v2m0 57v1m0 36v1m0 264v1m0 57v2m1-423v2m0 95v1m0 325v2m1-427v2m0 425v2m1-430v1m0 65v1m0 297v1m0 65v1m1-433v2m0 29v1m0 37v1m0 295v1m0 2v1m0 34v1m0 29v2m1-437v2m0 14v1m0 17v1m0 37v1m0 293v1m0 4v2m0 31v1m0 17v1m0 14v2m1-441v2m0 35v1m0 337v1m0 29v1m0 35v2m1-444v1m0 376v1m0 66v1m1-447v2m0 21v1m0 16v1m0 38v1m0 289v1m0 10v1m0 27v1m0 16v1m0 21v2m1-451v2m0 24v1m0 13v2m0 2v1m0 37v1m0 287v1m0 12v1m0 24v1m0 2v2m0 13v1m0 24v2m1-455v2m0 39v1m0 5v1m0 37v1m0 285v1m0 14v2m0 21v1m0 5v1m0 39v2m1-459v2m0 40v1m0 45v1m0 283v1m0 17v1m0 27v1m0 40v2m1-462v1m0 32v1m0 7v2m0 47v1m0 281v1m0 19v1m0 27v2m0 7v1m0 32v1m1-465v2m0 40v1m0 11v1m0 38v1m0 279v1m0 21v1m0 16v1m0 11v1m0 40v2m1-469v2m0 41v1m0 13v1m0 38v1m0 277v1m0 23v2m0 13v1m0 13v1m0 41v2m1-473v2m0 39v1m0 1v2m0 54v1m0 275v1m0 26v1m0 27v2m0 1v1m0 39v2m1-476v1m0 42v1m0 57v1m0 273v1m0 28v1m0 28v1m0 42v1m1-479v2m0 62v1m0 39v1m0 271v1m0 30v1m0 8v1m0 62v2m1-483v2m0 65v1m0 39v1m0 269v1m0 32v1m0 6v1m0 65v2m1-487v2m0 49v1m0 18v1m0 39v1m0 267v1m0 34v2m0 3v1m0 18v1m0 49v2m1-490v1m0 111v1m0 265v1m0 37v1m0 73v1m1-492v1m0 113v1m0 263v1m0 113v1m1-438v1m0 59v1m0 261v1m0 59v1m1-382v1m0 18v1m0 40v1m0 259v1m0 40v1m0 18v1m1-435v1m0 70v1m0 2v1m0 40v1m0 257v1m0 40v1m0 2v1m0 70v1m1-420v2m0 4v1m0 40v2m0 253v2m0 40v1m0 4v2m1-364v1m0 11v1m0 49v1m0 251v1m0 49v1m0 11v1m1-376v1m0 9v1m0 51v1m0 77v1m0 171v1m0 51v1m0 9v1m1-374v1m0 7v1m0 10v1m0 42v1m0 247v1m0 42v1m0 10v1m0 7v1m1-428v1m0 61v1m0 12v1m0 42v1m0 244v2m0 42v1m0 12v1m0 61v1m1-423v2m0 14v1m0 42v2m0 71v1m0 169v1m0 43v1m0 14v2m1-366v1m0 1v1m0 17v1m0 43v1m0 239v1m0 43v1m0 17v1m0 1v1m1-424v1m0 55v1m0 19v1m0 43v1m0 237v1m0 43v1m0 19v1m0 55v1m1-422v1m0 19v1m0 43v1m0 235v1m0 43v1m0 19v1m1-364v1m0 19v1m0 44v1m0 231v2m0 43v1m0 19v1m1-419v1m0 76v1m0 44v1m0 62v1m0 166v1m0 44v1m0 76v1m1-397v1m0 44v1m0 227v1m0 44v1m1-339v1m0 20v1m0 44v2m0 223v2m0 44v1m0 20v1m1-415v1m0 56v1m0 18v1m0 1v1m0 37v1m0 7v1m0 56v1m0 164v1m0 45v1m0 1v1m0 18v1m0 56v1m1-413v1m0 16v1m0 3v1m0 35v1m0 9v2m0 217v2m0 45v1m0 3v1m0 16v1m1-354v1m0 14v1m0 5v1m0 46v1m0 215v1m0 46v1m0 5v1m0 14v1m1-410v1m0 57v1m0 12v1m0 7v1m0 46v2m0 211v2m0 46v1m0 7v1m0 12v1m0 57v1m1-397v1m0 9v1m0 30v1m0 16v2m0 207v2m0 47v1m0 9v1m1-328v1m0 11v1m0 28v1m0 19v1m0 205v1m0 48v1m0 11v1m1-338v1m0 7v1m0 13v1m0 48v2m0 201v2m0 48v1m0 13v1m0 7v1m1-346v1m0 5v1m0 15v1m0 49v1m0 199v1m0 49v1m0 15v1m0 5v1m1-403v1m0 58v1m0 3v1m0 17v1m0 23v1m0 25v2m0 195v2m0 49v1m0 17v1m0 3v1m0 58v1m1-460v1m0 58v1m0 1v1m0 19v1m0 21v1m0 28v1m0 192v2m0 49v2m0 19v1m0 1v1m0 58v1m1-399v1m0 21v2m0 49v2m0 188v2m0 50v1m0 22v1m1-338v1m0 22v1m0 50v2m0 184v2m0 51v1m0 22v1m1-396v1m0 59v1m0 38v1m0 35v2m0 180v2m0 75v1m0 59v1m1-454v1m0 59v1m0 22v1m0 13v1m0 38v2m0 176v2m0 53v1m0 22v1m0 59v1m1-392v1m0 19v1m0 2v1m0 53v2m0 172v2m0 53v2m0 2v1m0 19v1m1-330v1m0 22v2m0 53v2m0 168v1m0 55v1m0 22v2m1-389v1m0 60v2m0 22v1m0 7v1m0 46v2m0 164v2m0 2v1m0 52v1m0 22v1m0 61v1m1-448v1m0 61v1m0 13v1m0 8v1m0 5v1m0 49v2m0 160v2m0 56v1m0 8v1m0 13v1m0 61v1m1-446v1m0 61v1m0 11v1m0 10v2m0 55v3m0 155v2m0 56v2m0 10v1m0 11v1m0 61v1m1-444v1m0 61v1m0 9v1m0 13v1m0 57v2m0 151v2m0 57v1m0 13v1m0 9v1m0 61v1m1-442v1m0 61v1m0 7v1m0 15v1m0 58v2m0 147v2m0 58v1m0 15v1m0 7v1m0 61v1m1-440v1m0 61v2m0 22v2m0 58v3m0 141v3m0 58v2m0 22v2m0 61v1m1-438v1m0 62v1m0 23v1m0 60v3m0 135v3m0 60v1m0 23v1m0 62v1m1-436v1m0 62v1m0 1v1m0 21v1m0 62v3m0 129v3m0 62v1m0 21v1m0 1v1m0 62v1m1-434v1m0 62v1m0 88v3m0 123v3m0 63v1m0 24v1m0 62v1m1-369v1m0 23v2m0 65v3m0 117v3m0 65v1m0 24v1m1-304v1m0 24v1m0 67v4m0 109v4m0 67v1m0 23v2m1-366v1m0 63v2m0 23v1m0 70v3m0 103v3m0 70v1m0 23v1m0 64v1m1-428v1m0 64v1m0 16v1m0 6v2m0 71v3m0 97v3m0 71v2m0 6v1m0 16v1m0 64v1m1-361v1m0 14v1m0 9v2m0 72v3m0 91v3m0 72v2m0 9v1m0 14v1m1-294v2m0 24v2m0 73v4m0 83v4m0 73v2m0 24v2m1-358v1m0 66v1m0 25v1m0 76v5m0 73v5m0 76v1m0 25v1m0 66v1m1-422v1m0 66v1m0 8v1m0 16v2m0 79v6m0 60v7m0 79v2m0 16v1m0 8v1m0 66v1m1-420v1m0 66v2m0 5v1m0 19v1m0 84v7m0 47v6m0 85v1m0 19v1m0 5v2m0 66v1m1-418v1m0 67v1m0 25v2m0 89v7m0 33v7m0 89v2m0 25v1m0 67v1m1-416v1m0 67v2m0 121v16m0 1v16m0 121v2m0 67v1m1-414v1m0 68v1m0 25v2m0 219v2m0 25v1m0 68v1m1-412v1m0 68v1m0 26v2m0 215v2m0 26v1m0 68v1m1-410v1m0 68v2m0 26v2m0 211v2m0 26v2m0 68v1m1-408v1m0 69v1m0 18v1m0 8v2m0 207v2m0 8v1m0 18v1m0 69v1m1-406v1m0 69v2m0 27v2m0 203v2m0 27v2m0 69v1m1-404v1m0 70v1m0 28v2m0 199v2m0 28v1m0 70v1m1-402v1m0 70v1m0 29v2m0 195v1m0 30v1m0 70v1m1-400v1m0 70v2m0 29v2m0 191v2m0 29v2m0 70v1m1-398v1m0 71v1m0 8v1m0 22v1m0 187v1m0 22v1m0 8v1m0 71v1m1-396v1m0 71v2m0 30v2m0 183v2m0 30v2m0 71v1m1-394v1m0 72v2m0 30v2m0 179v2m0 30v2m0 72v1m1-392v1m0 73v2m0 30v2m0 175v2m0 30v2m0 73v1m1-390v1m0 106v2m0 171v2m0 106v1m1-388v1m0 72v1m0 1v2m0 31v3m0 164v4m0 31v2m0 1v1m0 72v1m1-386v1m0 75v2m0 32v4m0 156v4m0 33v2m0 75v1m1-384v1m0 76v2m0 34v1m0 1v2m0 149v2m0 36v2m0 76v1m1-382v1m0 77v1m0 37v2m0 145v2m0 36v2m0 77v1m1-380v1m0 77v2m0 37v2m0 141v2m0 36v2m0 77v2m1-378v2m0 77v2m0 37v3m0 134v4m0 36v2m0 78v1m1-374v1m0 78v2m0 38v4m0 126v4m0 38v2m0 79v1m1-372v1m0 60v1m0 18v3m0 39v4m0 119v3m0 40v2m0 19v1m0 59v2m1-370v2m0 80v2m0 41v1m0 1v2m0 111v2m0 1v1m0 41v2m0 80v1m1-366v1m0 82v1m0 43v3m0 104v4m0 43v1m0 82v1m1-364v1m0 82v2m0 44v4m0 96v4m0 44v3m0 82v1m1-362v1m0 83v2m0 46v4m0 88v4m0 46v2m0 84v1m1-360v1m0 84v2m0 48v4m0 80v4m0 48v2m0 85v1m1-358v1m0 85v2m0 50v1m0 1v4m0 69v4m0 51v2m0 86v1m1-356v1m0 48v1m0 37v3m0 53v7m0 54v8m0 53v2m0 38v1m0 48v1m1-354v1m0 88v2m0 58v8m0 1v7m0 22v8m0 1v7m0 58v3m0 88v1m1-352v1m0 89v3m0 71v11m0 1v10m0 72v2m0 90v1m1-350v1m0 91v1m0 1v1m0 159v1m0 1v1m0 90v2m1-348v2m0 92v4m0 151v4m0 92v1m1-344v1m0 95v3m0 145v3m0 95v1m1-342v1m0 97v2m0 140v3m0 96v2m1-340v2m0 97v3m0 135v2m0 98v1m1-336v1m0 99v4m0 127v4m0 99v1m1-334v2m0 31v1m0 69v2m0 1v1m0 119v1m0 1v2m0 69v1m0 31v2m1-331v1m0 104v4m0 110v5m0 103v2m1-328v2m0 106v4m0 102v4m0 107v1m1-324v2m0 108v6m0 90v6m0 109v2m1-321v1m0 113v4m0 1v1m0 78v2m0 1v3m0 114v1m1-318v2m0 117v4m0 70v4m0 118v2m1-315v1m0 120v6m0 58v6m0 121v1m1-312v2m0 16v1m0 107v9m0 1v7m0 24v8m0 1v8m0 108v1m0 16v2m1-309v1m0 140v12m0 1v11m0 141v1m1-306v2m0 301v2m1-303v1m0 299v1m1-300v2m0 295v2m1-297v1m0 292v2m1-294v2m0 289v1m1-290v2m0 1v1m0 281v1m0 1v2m1-287v1m0 283v1m1-284v2m0 279v2m1-281v2m0 275v2m1-277v2m0 271v2m1-273v2m0 267v2m1-269v2m0 263v2m1-265v2m0 259v2m1-261v2m0 255v2m1-257v2m0 251v2m1-253v3m0 245v3m1-248v2m0 241v2m1-243v2m0 237v2m1-239v2m0 233v2m1-235v3m0 227v3m1-230v2m0 223v2m1-225v2m0 219v2m1-221v2m0 215v2m1-217v3m0 209v3m1-212v2m0 205v2m1-207v2m0 201v2m1-203v2m0 197v2m1-199v3m0 191v3m1-194v3m0 184v4m1-188v4m0 177v3m1-180v3m0 171v3m1-174v3m0 165v3m1-168v3m0 159v3m1-162v3m0 153v3m1-156v3m0 146v4m1-150v4m0 139v3m1-142v4m0 131v4m1-135v4m0 123v4m1-127v5m0 113v5m1-118v5m0 103v5m1-108v7m0 88v8m1-96v10m0 68v10m1-78v10m0 48v10m1-58v10m0 28v10m1-38v14m0 1v13"/>
<path stroke="#c0c0c0" d="M0 1v598m230-589v3m1 0v4m1 0v4m1 0v2m0 1v1m1 0v4m1 0v5m1 0v4m1 0v4m1 0v4m1 0v4m1 0v4m1 0v5m1 0v4m1 0v4m1 0v4m1 0v4m1 0v5m1 0v1m4 19v1m1 3v1m1 3v1m1 2v2m1 0v4m1 1v3m2 5v4m1 0v4m1 0v2m2 10v1m1 2v2m1 0v3m1 1v4m1 1v3m1 0v5m1 0v3m1 2v3m1 0v4m1 0v4m1 0v5m1 0v4m1 0v4m1 0v4m1 0v4m1 0v4m1 0v5m1 0v4m1 0v4m1 0v4m1 0v4m1 0v5m1 0v4m1 0v4m1 0v4m1 0v4m1 0v5m1 0v4m1 0v4m1 0v4m1 0v4m1 0v4m1 0v5m1 0v4m1 0v4m1 0v4m1 0v4m1 0v2m0 1v2m1 0v4m1 0v4m1 0v4m1 0v4m1 0v5m1 0v4m1 0v4m1 0v4m1 0v4m1 0v4m1 0v5m1 0v4m1 0v4m1 0v4m1 0v4m1 0v5m1 0v4m1 0v4m1 0v4m1 0v2m0 1v1m1 0v5m1 0v4m1 0v4m1 0v4m1 0v4m1 0v4m1 0v5m1 0v4m1 0v4m1 0v4m1 0v4m1 0v5m1 0v4m1 0v4m1 0v4m1 0v4m1 0v5m1 0v4m1 0v4m1 0v4m1 0v4m1 0v5m1 0v4m1 0v4m1 0v2m3 14v1m1 3v1m1 3v1m1 3v1m1 2v2m1 0v5m1 0v4m1 0v3m1 1v4m1 0v4m1 0v5m1 0v4m1 0v4m1 0v4m1 0v4m1 0v4m1 0v5m1 0v4m1 0v1m0 1v2m1 0v4m1 0v4m1 0v3m231-588v598m160-598v598"/>
<path stroke="#808080" d="M73 226v1m0 145v1m4 11v1m5-183v1m0 193v1m3-202v1m0 207v1m2-213v1m0 215v1m2-221v1m0 223v1m1-197v1m0 167v1m1-200v1m0 229v1m2-207v1m0 181v1m1-201v1m0 217v1m1-233v1m0 245v1m2-250v1m0 251v1m1-248v1m0 241v1m2-246v1m0 247v1m2-253v1m0 18v1m0 217v1m0 18v1m1-247v1m0 235v1m1-250v1m0 261v1m1-258v1m0 4v1m0 241v1m0 4v1m1-243v1m0 231v1m1-246v1m0 257v1m1-254v1m0 4v1m0 237v1m0 4v1m1-268v1m0 4v1m0 275v1m0 4v1m1-281v1m0 9v1m0 253v1m0 9v1m2-284v1m0 4v1m0 281v1m0 4v1m1-287v1m0 4v1m0 269v1m0 4v1m1-291v1m0 15v1m0 267v1m1-284v1m0 4v1m0 287v1m0 4v1m1-298v1m0 4v1m0 4v1m0 275v1m0 4v1m0 4v1m1-296v1m0 4v1m0 4v1m0 4v1m0 263v1m0 4v1m0 4v1m0 4v1m1-294v1m0 4v1m0 281v1m0 4v1m2-302v1m0 19v1m0 269v1m0 19v1m1-310v1m0 9v1m0 4v1m0 277v1m0 4v1m0 9v1m1-314v1m0 5v1m0 9v1m0 4v1m0 275v1m0 4v1m0 9v1m0 5v1m1-318v1m0 5v1m0 9v1m0 283v1m0 9v1m0 5v1m1-316v1m0 15v1m0 281v1m0 15v1m1-320v1m0 5v1m0 70v1m0 240v1m0 5v1m1-324v1m0 5v1m0 4v1m0 299v1m0 4v1m0 5v1m1-322v1m0 10v1m0 64v1m0 232v1m0 10v1m1-326v1m0 5v1m0 10v1m0 295v1m0 10v1m0 5v1m1-330v1m0 5v1m0 4v1m0 5v1m0 63v1m0 229v1m0 5v1m0 4v1m0 5v1m1-328v1m0 10v1m0 303v1m0 10v1m1-326v1m0 10v1m0 68v1m0 232v1m0 10v1m1-324v1m0 4v1m0 5v1m0 299v1m0 5v1m0 4v1m1-322v1m0 4v1m0 73v1m0 235v1m0 4v1m1-332v1m0 11v1m0 4v1m0 307v1m0 4v1m0 11v1m1-342v1m0 11v1m0 4v1m0 72v1m0 232v1m0 4v1m0 11v1m1-340v1m0 11v1m0 313v1m0 11v1m1-344v1m0 5v1m0 11v1m0 76v1m0 234v1m0 11v1m0 5v1m1-348v1m0 5v1m0 333v1m0 5v1m1-346v1m0 5v1m0 87v1m0 243v1m0 5v1m1-350v1m0 5v1m0 5v1m0 329v1m0 5v1m0 5v1m1-354v1m0 5v1m0 5v1m0 86v1m0 240v1m0 4v2m0 5v1m1-352v1m0 5v2m0 4v1m0 325v1m0 4v1m0 6v1m1-350v1m0 6v1m0 4v1m0 85v1m0 237v1m0 4v1m0 6v1m1-354v1m0 5v1m0 6v1m0 331v1m0 5v2m0 5v1m1-358v1m0 5v2m0 5v1m0 89v1m0 189v1m0 49v1m0 5v1m0 6v1m1-356v1m0 6v1m0 5v1m0 327v1m0 5v1m0 6v1m1-354v1m0 6v1m0 94v1m0 187v1m0 54v1m0 5v2m1-352v2m0 5v1m0 335v1m0 5v1m1-360v1m0 11v1m0 5v1m0 93v1m0 184v1m0 54v1m0 5v1m0 11v1m1-370v1m0 11v1m0 343v1m0 11v1m1-368v1m0 11v1m0 98v1m0 182v1m0 59v1m0 11v1m1-366v1m0 11v1m0 339v1m0 11v1m1-370v1m0 5v1m0 109v1m0 179v1m0 70v2m0 5v1m1-374v2m0 4v2m0 357v1m0 5v2m1-371v1m0 5v1m0 107v1m0 177v1m0 69v1m0 5v1m1-375v1m0 6v1m0 5v1m0 353v1m0 5v1m0 6v1m1-380v2m0 5v1m0 5v1m0 106v1m0 174v1m0 69v1m0 5v1m0 5v2m1-377v1m0 5v1m0 5v1m0 349v1m0 5v1m0 5v1m1-374v1m0 5v2m0 110v1m0 172v1m0 73v2m0 5v1m1-379v2m0 5v2m0 5v1m0 355v1m0 5v2m0 5v2m1-383v1m0 6v1m0 5v1m0 109v1m0 169v1m0 73v1m0 5v1m0 6v1m1-380v1m0 6v1m0 363v1m0 6v1m1-378v2m0 5v2m0 113v1m0 167v1m0 77v2m0 5v2m1-375v1m0 6v1m0 357v1m0 6v1m1-372v1m0 119v1m0 164v1m0 84v1m1-370v2m0 365v2m1-382v2m0 13v1m0 117v1m0 162v1m0 82v1m0 13v2m1-393v1m0 389v1m1-390v2m0 128v1m0 160v1m0 95v2m1-394v2m0 5v1m0 383v1m0 5v2m1-397v1m0 5v2m0 126v1m0 158v1m0 93v2m0 5v1m1-394v2m0 5v1m0 377v1m0 5v2m1-399v1m0 7v1m0 5v2m0 124v1m0 155v1m0 92v2m0 5v1m0 7v1m1-404v2m0 6v2m0 383v2m0 6v2m1-401v1m0 7v1m0 129v1m0 153v1m0 97v1m0 7v1m1-404v1m0 5v2m0 6v2m0 377v2m0 6v2m0 5v1m1-408v2m0 5v2m0 46v1m0 87v1m0 150v1m0 103v2m0 5v2m1-405v1m0 6v1m0 47v1m0 339v1m0 6v1m1-402v2m0 5v2m0 132v1m0 148v1m0 101v2m0 5v2m1-399v2m0 5v1m0 46v1m0 334v1m0 5v2m1-395v1m0 137v1m0 145v1m0 107v1m1-392v2m0 51v1m0 335v2m1-389v1m0 52v1m0 82v1m0 143v1m0 105v1m1-402v1m0 415v1m1-416v2m0 67v1m0 81v1m0 140v1m0 120v2m1-413v2m0 407v2m1-416v1m0 6v2m0 65v1m0 80v1m0 138v1m0 117v2m0 6v1m1-420v2m0 6v2m0 65v1m0 333v2m0 6v2m1-417v2m0 6v2m0 143v1m0 135v1m0 115v2m0 6v2m1-413v1m0 7v1m0 64v1m0 328v1m0 6v2m1-418v1m0 7v2m0 149v1m0 133v1m0 121v1m0 7v2m1-424v2m0 7v2m0 70v1m0 330v2m0 6v2m1-420v2m0 7v2m0 70v1m0 75v1m0 130v1m0 119v2m0 6v2m1-416v2m0 410v2m1-421v1m0 8v2m0 77v1m0 74v1m0 128v1m0 124v2m0 8v2m1-428v2m0 8v2m0 402v2m0 8v2m1-424v2m0 8v2m0 75v1m0 73v1m0 125v1m0 123v1m0 8v2m1-420v2m0 85v1m0 328v2m1-416v2m0 156v1m0 123v1m0 129v2m1-412v2m0 83v1m0 322v2m1-408v2m0 153v1m0 120v1m0 128v1m1-420v1m0 98v1m0 334v1m1-434v2m0 98v1m0 68v1m0 118v1m0 142v2m1-431v2m0 425v2m1-427v2m0 96v1m0 67v1m0 115v1m0 140v2m1-432v2m0 7v2m0 417v2m0 7v2m1-437v2m0 7v2m0 94v1m0 66v1m0 113v1m0 137v2m0 7v2m1-433v2m0 7v1m0 95v1m0 315v1m0 6v3m1-429v3m0 166v1m0 110v1m0 143v2m1-434v2m0 9v2m0 100v1m0 316v2m0 9v2m1-441v2m0 9v2m0 100v1m0 62v1m0 108v1m0 140v2m0 9v2m1-437v3m0 429v3m1-432v3m0 107v1m0 61v1m0 105v1m0 147v3m1-438v2m0 10v2m0 419v2m0 10v2m1-445v2m0 10v1m0 106v1m0 60v1m0 103v1m0 145v1m0 10v2m1-441v3m0 116v1m0 316v3m1-436v3m0 173v1m0 100v1m0 152v3m1-430v2m0 113v1m0 309v2m1-425v2m0 170v1m0 98v1m0 149v2m2-306v1m0 55v1m0 95v1m1-284v2m0 447v2m1-449v3m0 128v1m0 54v1m0 93v1m0 163v3m1-444v3m0 435v3m1-438v3m0 124v1m0 53v1m0 90v1m0 159v3m1-444v1m0 11v2m0 124v1m0 300v2m0 11v1m1-452v3m0 187v1m0 88v1m0 168v3m1-448v4m0 132v1m0 304v4m1-441v3m0 181v1m0 85v1m0 163v3m1-447v2m0 11v2m0 129v1m0 297v2m0 11v2m1-455v3m0 141v1m0 48v1m0 83v1m0 172v3m1-450v4m0 439v4m1-443v3m0 136v1m0 47v1m0 80v1m0 167v3m1-449v3m0 10v2m0 429v2m0 10v3m1-456v4m0 144v1m0 46v1m0 78v1m0 174v4m1-449v4m0 142v1m0 294v4m1-441v3m0 185v1m0 75v1m0 169v3m1-293v1m1 44v1m0 73v1m1-118v1m1 1v1m0 41v1m0 70v1m1-275v3m0 412v1m0 44v3m1-460v4m0 156v1m0 40v1m0 68v1m0 139v1m0 42v4m1-453v4m0 398v1m0 1v1m0 40v4m1-445v3m0 151v1m0 39v1m0 65v1m0 133v1m0 1v1m0 41v3m1-453v3m0 165v1m0 235v1m0 57v3m1-462v4m0 200v1m0 63v1m0 128v1m0 1v1m0 55v4m1-455v4m0 159v1m0 225v1m0 1v1m0 55v4m1-447v3m0 158v1m0 35v1m0 60v1m0 124v1m0 56v3m1-455v3m0 388v1m0 1v1m0 70v3m1-464v4m0 168v1m0 34v1m0 58v1m0 119v1m0 70v4m1-457v4m0 374v1m0 1v1m0 68v4m1-449v3m0 163v1m0 33v1m0 55v1m0 113v1m0 1v1m0 69v3m1-457v3m0 177v1m0 199v1m0 85v3m1-466v4m0 206v1m0 53v1m0 108v1m0 1v1m0 83v4m1-459v4m0 171v1m0 189v1m0 1v1m0 83v4m1-451v3m0 199v1m0 51v1m0 104v1m0 84v3m1-274v1m0 181v1m0 1v1m1-183v1m0 27v1m0 49v1m0 99v1m1-5v1m0 1v1m1-175v1m0 26v1m0 46v1m0 93v1m0 1v1m1-360v3m0 352v1m0 40v3m0 69v3m1-468v7m0 181v1m0 25v1m0 44v1m0 88v1m0 1v1m0 36v6m0 65v7m1-458v4m0 179v1m0 153v1m0 1v1m0 37v3m0 67v4m1-243v1m0 41v1m0 84v1m1-347v4m0 192v1m0 145v1m0 1v1m0 124v4m1-469v6m0 210v1m0 39v1m0 79v1m0 122v6m1-459v4m0 184v1m0 137v1m0 1v1m0 120v4m1-263v1m0 20v1m0 36v1m0 73v1m0 1v1m1-336v4m0 327v1m0 139v4m1-471v7m0 192v1m0 19v1m0 34v1m0 68v1m0 1v1m0 134v7m1-460v3m0 311v1m0 135v3m1-259v1m0 18v1m0 31v1m0 64v1m0 1v1m1-117v1m0 109v1m0 1v1m1-320v7m0 218v1m0 29v1m0 59v1m0 152v7m1-468v7m0 195v1m0 101v1m0 1v1m0 147v7m1-242v1m0 26v1m0 53v1m0 1v1m1-99v1m0 93v1m1-93v1m0 13v1m0 24v1m0 48v1m0 1v1m1-5v1m1-85v1m0 12v1m0 21v1m0 44v1m0 1v1m1-81v1m0 73v1m0 1v1m1-294v6m0 223v1m0 19v1m0 39v1m0 178v7m1-469v8m0 205v1m0 65v1m0 1v1m0 173v7m1-238v1m0 16v1m0 33v1m0 1v1m1-63v1m0 57v1m1-281v7m0 217v1m0 7v1m0 14v1m0 28v1m0 1v1m0 190v8m1-470v7m0 260v1m0 188v6m1-243v1m0 6v1m0 11v1m0 24v1m0 1v1m1-7v1m0 1v1m1-269v7m0 221v1m0 5v1m0 9v1m0 19v1m0 205v7m1-470v7m0 216v1m0 29v1m0 1v1m0 200v7m1-235v1m0 6v1m0 13v1m0 1v1m1-27v1m0 21v1m1-255v7m0 229v1m0 4v1m0 8v1m0 1v1m0 217v7m1-470v7m0 220v1m0 13v1m0 214v7m1-234v2m0 1v1m0 4v1m0 1v1m1-7v1m0 1v1m1-5v1m1-5v1m0 1v1m1-7v1m0 1v1m0 4v1m0 1v2m1-234v7m0 214v1m0 13v1m0 220v7m1-470v7m0 217v1m0 1v1m0 8v1m0 4v1m0 229v7m1-255v1m0 21v1m1-27v1m0 1v1m0 13v1m0 6v1m1-235v7m0 200v1m0 1v1m0 29v1m0 216v7m1-470v7m0 205v1m0 19v1m0 9v1m0 5v1m0 221v7m1-269v1m0 1v1m1-7v1m0 1v1m0 24v1m0 11v1m0 6v1m1-244v8m0 187v1m0 259v7m1-468v6m0 191v1m0 1v1m0 28v1m0 14v1m0 7v1m0 216v7m1-280v1m0 57v1m1-63v1m0 1v1m0 33v1m0 16v1m1-239v8m0 173v1m0 1v1m0 65v1m0 205v7m1-468v6m0 179v1m0 39v1m0 19v1m0 222v7m1-294v1m0 1v1m0 73v1m1-81v1m0 1v1m0 44v1m0 21v1m0 12v1m1-85v1m1-5v1m0 1v1m0 48v1m0 24v1m0 13v1m1-93v1m0 93v1m1-99v1m0 1v1m0 53v1m0 26v1m1-242v7m0 147v1m0 1v1m0 101v1m0 195v7m1-468v7m0 152v1m0 59v1m0 29v1m0 218v7m1-320v1m0 1v1m0 109v1m1-117v1m0 1v1m0 64v1m0 31v1m0 18v1m1-259v4m0 134v1m0 310v4m1-460v7m0 134v1m0 1v1m0 68v1m0 34v1m0 19v1m0 192v7m1-470v3m0 139v1m0 327v3m1-335v1m0 1v1m0 73v1m0 36v1m0 20v1m1-263v4m0 120v1m0 1v1m0 137v1m0 184v4m1-459v6m0 122v1m0 79v1m0 39v1m0 210v6m1-469v4m0 124v1m0 1v1m0 145v1m0 192v4m1-347v1m0 84v1m0 41v1m1-243v4m0 107v1m0 1v1m0 153v1m0 179v4m1-458v7m0 107v1m0 1v1m0 88v1m0 44v1m0 25v1m0 181v7m1-468v3m0 112v1m0 352v3m1-360v1m0 95v1m0 46v1m0 26v1m1-175v1m0 1v1m1-5v1m0 99v1m0 49v1m0 27v1m1-183v1m0 1v1m0 181v1m1-274v3m0 84v1m0 104v1m0 51v1m0 199v3m1-451v4m0 83v1m0 1v1m0 189v1m0 171v4m1-459v4m0 83v1m0 1v1m0 108v1m0 53v1m0 206v4m1-465v2m0 82v1m0 2v1m0 199v1m0 177v2m1-456v3m0 69v1m0 1v1m0 113v1m0 55v1m0 197v3m1-449v4m0 68v1m0 2v1m0 373v4m1-457v4m0 70v1m0 119v1m0 58v1m0 34v1m0 168v4m1-464v3m0 70v1m0 1v1m0 3v2m0 383v3m1-455v3m0 56v1m0 6v1m0 117v1m0 60v1m0 35v1m0 158v3m1-447v4m0 55v1m0 1v1m0 7v1m0 217v1m0 159v4m1-455v4m0 55v1m0 1v1m0 10v1m0 117v1m0 63v1m0 200v4m1-462v3m0 57v1m0 13v1m0 221v1m0 165v3m1-453v3m0 41v1m0 16v1m0 118v1m0 65v1m0 39v1m0 151v3m1-445v4m0 40v1m0 1v1m0 398v4m1-453v4m0 42v1m0 139v1m0 68v1m0 40v1m0 156v4m1-460v3m0 44v1m0 412v3m1-275v1m0 70v1m0 41v1m1 1v1m1-118v1m0 73v1m1 44v1m1-293v3m0 169v1m0 75v1m0 185v3m1-441v4m0 294v1m0 142v4m1-449v4m0 174v1m0 78v1m0 46v1m0 144v4m1-456v3m0 10v2m0 429v2m0 10v3m1-449v3m0 167v1m0 80v1m0 47v1m0 136v3m1-443v4m0 439v4m1-450v3m0 172v1m0 83v1m0 48v1m0 141v3m1-455v2m0 11v2m0 297v1m0 129v2m0 11v2m1-447v3m0 163v1m0 85v1m0 181v3m1-441v4m0 304v1m0 132v4m1-448v3m0 168v1m0 88v1m0 187v3m1-452v1m0 11v2m0 300v1m0 124v2m0 11v1m1-444v3m0 159v1m0 90v1m0 53v1m0 124v3m1-438v3m0 435v3m1-444v3m0 163v1m0 93v1m0 54v1m0 128v3m1-449v2m0 447v2m1-284v1m0 95v1m0 55v1m1 1v1m1-308v2m0 149v1m0 98v1m0 170v2m1-425v2m0 309v1m0 113v2m1-430v3m0 253v1m0 173v3m1-436v3m0 316v1m0 116v3m1-441v2m0 10v1m0 145v1m0 103v1m0 60v1m0 106v1m0 10v2m1-444v1m0 10v2m0 419v2m0 10v1m1-437v3m0 147v1m0 105v1m0 61v1m0 107v3m1-432v3m0 429v3m1-437v2m0 9v2m0 140v1m0 108v1m0 62v1m0 100v2m0 9v2m1-441v2m0 9v2m0 316v1m0 100v2m0 9v2m1-435v3m0 254v1m0 166v2m1-428v2m0 7v1m0 315v1m0 95v1m0 6v3m1-433v2m0 7v2m0 251v1m0 66v1m0 94v2m0 7v2m1-437v2m0 7v2m0 417v2m0 7v2m1-432v2m0 140v1m0 115v1m0 67v1m0 96v2m1-427v2m0 425v2m1-431v2m0 142v1m0 118v1m0 68v1m0 98v2m1-434v1m0 334v1m0 98v1m1-421v2m0 128v1m0 120v1m0 153v1m1-408v2m0 323v1m0 82v2m1-412v2m0 130v1m0 123v1m0 155v2m1-416v2m0 329v1m0 84v2m1-420v2m0 8v2m0 123v1m0 125v1m0 73v1m0 75v1m0 8v2m1-424v2m0 8v2m0 402v2m0 8v2m1-427v1m0 8v2m0 125v1m0 128v1m0 74v1m0 76v2m0 8v2m1-422v2m0 410v2m1-416v2m0 7v2m0 119v1m0 130v1m0 75v1m0 70v2m0 6v2m1-420v2m0 7v2m0 330v1m0 70v2m0 6v2m1-423v1m0 7v2m0 121v1m0 133v1m0 149v1m0 7v2m1-418v1m0 7v1m0 328v1m0 64v1m0 6v2m1-413v2m0 6v2m0 115v1m0 135v1m0 143v2m0 6v2m1-417v2m0 6v2m0 333v1m0 65v2m0 6v2m1-420v1m0 6v2m0 117v1m0 138v1m0 80v1m0 65v2m0 6v1m1-416v2m0 407v2m1-413v2m0 120v1m0 140v1m0 81v1m0 67v2m1-416v1m0 415v1m1-402v1m0 105v1m0 143v1m0 82v1m0 52v1m1-389v2m0 335v1m0 51v2m1-392v1m0 107v1m0 145v1m0 137v1m1-395v2m0 5v1m0 334v1m0 46v1m0 5v2m1-399v2m0 5v2m0 101v1m0 148v1m0 132v2m0 5v2m1-402v1m0 6v1m0 339v1m0 47v1m0 6v1m1-405v2m0 5v2m0 103v1m0 150v1m0 87v1m0 46v2m0 5v2m1-408v1m0 5v2m0 6v2m0 377v2m0 6v2m0 5v1m1-404v1m0 7v1m0 97v1m0 153v1m0 129v1m0 7v1m1-401v2m0 6v2m0 383v2m0 6v2m1-404v1m0 7v1m0 5v2m0 92v1m0 155v1m0 124v2m0 5v1m0 7v1m1-399v2m0 5v1m0 377v1m0 5v2m1-394v1m0 5v2m0 93v1m0 158v1m0 126v2m0 5v1m1-397v2m0 5v1m0 383v1m0 5v2m1-394v2m0 95v1m0 160v1m0 128v2m1-390v1m0 389v1m1-393v2m0 13v1m0 82v1m0 162v1m0 117v1m0 13v2m1-382v2m0 365v2m1-370v1m0 84v1m0 164v1m0 119v1m1-372v1m0 6v1m0 357v1m0 6v1m1-375v2m0 5v2m0 77v1m0 167v1m0 113v2m0 5v2m1-378v1m0 6v1m0 363v1m0 6v1m1-380v1m0 6v1m0 5v1m0 73v1m0 169v1m0 109v1m0 5v1m0 6v1m1-383v2m0 5v2m0 5v1m0 355v1m0 5v2m0 5v2m1-379v1m0 5v2m0 73v1m0 172v1m0 110v2m0 5v1m1-374v1m0 5v1m0 5v1m0 349v1m0 5v1m0 5v1m1-377v2m0 5v1m0 5v1m0 69v1m0 174v1m0 106v1m0 5v1m0 5v2m1-380v1m0 6v1m0 5v1m0 353v1m0 5v1m0 6v1m1-375v1m0 5v1m0 69v1m0 177v1m0 107v1m0 5v1m1-371v2m0 4v2m0 357v1m0 5v2m1-374v1m0 5v1m0 71v1m0 179v1m0 108v2m0 5v1m1-370v1m0 11v1m0 339v1m0 11v1m1-366v1m0 11v1m0 59v1m0 182v1m0 98v1m0 11v1m1-368v1m0 11v1m0 343v1m0 11v1m1-358v1m0 5v1m0 54v1m0 184v1m0 93v1m0 5v1m1-349v2m0 5v1m0 335v1m0 5v1m1-351v1m0 6v1m0 54v1m0 187v1m0 94v1m0 5v2m1-354v1m0 6v1m0 5v1m0 327v1m0 5v1m0 6v1m1-356v1m0 5v2m0 5v1m0 49v1m0 189v1m0 89v1m0 5v1m0 6v1m1-358v1m0 5v1m0 6v1m0 331v1m0 5v2m0 5v1m1-354v1m0 6v1m0 4v1m0 237v1m0 85v1m0 4v1m0 6v1m1-350v1m0 5v2m0 4v1m0 325v1m0 4v1m0 6v1m1-352v1m0 5v1m0 5v1m0 327v1m0 4v2m0 5v1m1-354v1m0 5v1m0 5v1m0 329v1m0 5v1m0 5v1m1-350v1m0 5v1m0 243v1m0 87v1m0 5v1m1-346v1m0 5v1m0 333v1m0 5v1m1-348v1m0 5v1m0 11v1m0 234v1m0 76v1m0 11v1m0 5v1m1-344v1m0 11v1m0 313v1m0 11v1m1-340v1m0 11v1m0 4v1m0 305v1m0 4v1m0 11v1m1-342v1m0 11v1m0 4v1m0 307v1m0 4v1m0 11v1m1-332v1m0 4v1m0 235v1m0 73v1m0 4v1m1-322v1m0 4v1m0 5v1m0 299v1m0 5v1m0 4v1m1-324v1m0 4v1m0 5v1m0 232v1m0 68v1m0 5v1m0 4v1m1-326v1m0 10v1m0 303v1m0 10v1m1-328v1m0 10v1m0 5v1m0 229v1m0 63v1m0 5v1m0 10v1m1-330v1m0 5v1m0 4v1m0 5v1m0 295v1m0 5v1m0 4v1m0 5v1m1-326v1m0 10v1m0 232v1m0 64v1m0 10v1m1-322v1m0 10v1m0 299v1m0 10v1m1-324v1m0 5v1m0 4v1m0 235v1m0 65v1m0 4v1m0 5v1m1-320v1m0 15v1m0 281v1m0 15v1m1-316v1m0 15v1m0 283v1m0 15v1m1-318v1m0 5v1m0 9v1m0 4v1m0 275v1m0 4v1m0 9v1m0 5v1m1-314v1m0 9v1m0 4v1m0 277v1m0 4v1m0 9v1m1-310v1m0 9v1m0 9v1m0 269v1m0 9v1m0 9v1m2-297v1m0 281v1m1-289v1m0 4v1m0 4v1m0 4v1m0 263v1m0 4v1m0 4v1m0 4v1m1-296v1m0 4v1m0 4v1m0 275v1m0 4v1m0 4v1m1-298v1m0 4v1m0 287v1m0 4v1m1-300v1m0 15v1m0 267v1m1-275v1m0 4v1m0 269v1m0 4v1m1-287v1m0 4v1m0 281v1m0 4v1m2-284v1m0 9v1m0 253v1m0 9v1m1-281v1m0 4v1m0 275v1m0 4v1m1-268v1m0 4v1m0 237v1m0 4v1m1-254v1m0 257v1m1-246v1m0 231v1m1-243v1m0 4v1m0 241v1m0 4v1m1-258v1m0 261v1m1-250v1m0 235v1m1-247v1m0 18v1m0 217v1m0 18v1m2-253v1m0 247v1m1-227v1m0 203v1m1-224v1m0 241v1m1-248v1m0 27v1m0 195v1m0 27v1m1-235v1m0 215v1m1-232v1m0 245v1m2-215v1m0 181v1m2-207v1m0 229v1m1-200v1m0 167v1m1-197v1m0 223v1m7-210v1m0 193v1m5-13v1m4-159v1m0 145v1"/>
<path stroke="#ff0000" d="M106 122v1m1-2v1m1-10v1m0 7v1m1-8v1m0 5v1m1-6v1m0 3v1m1-4v1m0 1v1m0 172v6m0 1v8m1-189v1m0 172v1m1-175v1m0 1v1m0 170v1m1-175v1m0 3v1m0 170v1m1-177v1m0 5v1m0 161v1m0 8v6m0 1v8m1-193v1m0 7v1m0 158v2m1-170v1m0 165v2m1-169v1m0 160v1m0 3v2m0 18v4m0 4v1m1-195v1m0 162v3m1-167v1m1 186v1m0 4v4m1-196v3m2 184v9m1-34v12m0 1v2m1-16v1m1-2v1m0 26v1m0 7v1m22-5v1m2-20v1m72 265v3m1-4v1m0 3v1m1 0v1m3-6v1m1 0v3m1 0v4m1 0v8m1-12v4m1-7v3m1-4v1m3 4v1m1-6v1m0 3v1m1-4v3m13-386v1m14-5v1m5 2v1m8 15v1m2-11v1m4 12v1m1-11v1m3 1v1m2 10v1m3 1v1m3 0v1m1-11v1m1 1v1m1 9v1m1-11v1m2 10v1m1-9v1m2 9v1m1-11v1m2 2v1m0 8v1m1-11v1m2 10v1m1-10v1m1 1v1m1 8v1m1-10v1m2 1v1m0 7v1m1-10v1m0 1v1m2 8v1m1-10v1m2 2v1m0 7v1m1-10v1m2 9v1m1-10v1m1 2v1m1 7v1m1-10v1m1 2v1m1 7v1m1-10v1m2 9v1m1-9v1m0 1v1m2 7v1m1-10v1m2 3v1m0 5v1m1-9v1m0 5v1m2 3v1m1-9v1m1 2v1m1 6v1m1-10v1m2 9v1m1-9v1m0 2v1m2-44v1m0 49v1m1-58v1m0 8v1m0 1v1m0 37v1m1-37v1m1 1v1m0 37v1m0 4v1m1-42v1m0 32v1m1-32v1m0 1v1m1 1v1m0 36v1m1-36v1m0 26v1m1-26v1m0 1v1m0 26v1m1-26v1m0 30v1m1-30v1m0 20v1m1-20v1m1 1v1m0 1v1m0 23v1m1-91v5m0 63v1m0 14v1m0 2v1m1-89v2m0 5v2m0 63v1m1-74v1m0 9v1m0 64v1m0 19v1m1-97v1m0 11v1m0 65v1m0 1v1m0 7v1m1-7v1m1 1v1m0 13v1m1-13v1m0 1v1m2-83v1m0 92v1m1-6v1m1 3v1m1 1v2m1-9v1m0 8v1m1-103v1m0 11v1m0 91v1m1-104v1m0 9v1m0 90v1m0 3v1m0 1v1m1-107v2m0 5v2m0 84v1m0 14v1m1-107v5m0 103v1m1-9v1m0 9v1m1-18v1m0 18v1m0 1v1m1 1v1m1-15v1m0 15v1m1-24v1m0 24v1m0 1v1m1 1v1m1-25v1m0 2v1m0 22v1m1-31v1m0 31v1m1 1v1m0 1v1m1-28v1m0 28v1m1-37v1m0 37v1m1-34v1m0 34v1m1-33v1m0 33v1m0 1v1m1-43v1m0 43v1m1 1v1m1-39v1m0 39v1m0 1v1m1-50v1m0 4v1m0 45v1m1 1v1m1-45v1m0 45v1m1-54v1m0 54v1m0 1v1m1 1v1m1-54v1m0 1v1m0 52v1m1-60v1m0 60v1m1 1v1m0 1v1m1-58v1m0 58v1m1-66v1m0 66v1m1-63v1m0 63v1m0 1v1m1-65v1m0 65v1m1-73v1m0 73v1m1 1v1m1-69v1m0 69v1m0 1v1m1-79v1m0 4v1m0 74v1m1 1v1m1-75v1m0 75v1m1-78v1m0 78v1m0 1v1m1 1v1m1 1v1m1-90v1m0 90v1m1 1v1m0 1v1m1-89v1m0 89v1m1-95v1m0 95v1m1 1v1m0 1v1m1-94v1m0 94v1m1-102v1m0 102v1m1-98v1m0 98v1m1 1v1m7-97v1m8-2v1m22-1v5m1-6v1m0 5v1m1-8v1m0 7v1m6-1v1m1-8v1m0 5v1m1-9v1m0 2v5m1-9v1m1-2v1m1-2v1m1-2v1m2-1v4m62-23v1m1 0v1m1-10v5m0 5v1m1-12v1m0 5v1m0 3v1m1-12v1m0 7v3m1-12v1m6-1v1m1 0v1m0 7v3m1-10v1m0 5v1m0 3v1m1-10v5m0 5v1m1 0v1m1 0v1m184-1v3m0 39v2m1-177v1m0 1v3m0 35v1m0 7v1m0 83v1m0 3v1m0 37v1m0 2v1m0 8v1m1-182v3m0 75v2m0 99v2m1-184v3m0 37v5m0 135v2m1-184v1m0 133v1m0 39v1m0 2v1m1-176v1m0 170v1m0 1v2m1-135v5m0 36v2m0 87v1m0 8v6m0 1v1m1-185v1m0 3v1m0 123v1m0 3v1m0 43v1m1-180v2m0 2v3m0 32v1m0 7v1m0 84v3m0 36v1"/>
<path stroke="#00ff00" d="M38 365v1m0 9v1m1-13v2m0 8v2m1-13v1m0 9v1m1-12v1m0 9v1m1-13v1m0 9v1m1-9v3m0 7v3m1-9v1m0 9v1m1-13v1m0 9v1m1-12v1m0 9v1m1-12v1m0 9v1m1-13v1m0 9v1m1-9v3m0 7v3m1-9v1m0 9v1m1-13v1m0 9v1m1-12v1m0 9v1m1-13v2m0 8v2m1-13v1m0 9v1m101-65v1m2-8v1m1 4v1m3-9v1m0 5v1m3-3v1m1-8v1m2 4v1m2-8v1m1 3v1m3-8v1m0 4v1m3-3v1m1-7v1m2 3v1m2-7v1m1 3v1m3-8v1m0 4v1m3-3v1m1-7v1m2 3v1m2-8v1m1 4v1m3-8v1m0 4v1m3-4v1m1-6v1m2 2v1m2-7v1m1 3v1m3-7v1m0 3v1m3-3v1m1-6v1m2 2v1m2-7v1m1 3v1m3-7v1m0 3v1m3-3v1m1-6v1m2 1v1m2-6v1m1 2v1m3-6v1m0 2v1m2-127v5m1-6v1m0 5v1m0 118v1m1-5v1m2-114v3m0 1v4m0 107v1m2-6v1m1-119v1m0 5v1m0 114v1m1-121v5m2 110v1m0 2v1m3-3v1m1-5v1m1-79v1m1 79v1m2-6v1m1 1v1m3-6v1m0 2v1m3-3v1m1-4v1m2 0v1m2-5v1m1 1v1m1 211v1m1-2v1m1-217v1m0 2v1m0 211v1m1-2v1m1-2v1m1-213v1m0 210v1m1-215v1m0 211v2m1-3v1m1-211v1m0 208v1m1-2v1m1-213v1m0 210v1m1-210v1m0 207v1m1-2v1m1-2v1m1-212v1m0 2v1m0 206v1m1-2v1m1-2v1m1-209v1m0 206v1m1-210v1m0 206v2m1-3v1m1-207v1m0 204v1m1-2v1m1-208v1m0 205v1m1-206v1m0 203v1m1-2v1m1-2v1m1-207v1m0 1v1m0 202v1m1-2v1m1-2v1m1-204v1m0 201v1m1-205v1m0 201v2m1-3v1m1-202v1m0 199v1m1-2v1m1-203v1m0 200v1m1-201v1m0 198v1m1-2v1m1-2v1m1-202v1m0 1v1m0 197v1m1-2v1m1-2v1m1-199v1m0 196v1m1-200v1m0 196v2m1-3v1m1-198v1m0 195v1m1-2v1m1-2v1m1-2v1m1-2v1m1-2v1m1-197v2m0 193v1m1-2v1m1-2v1m1-195v1m0 192v1m1-196v1m0 192v2m1-3v1m1-193v1m0 190v1m1-2v1m1-2v1m1-2v1m1-2v1m1-2v1m1-192v2m0 188v1m1-2v1m1-2v1m1-190v1m0 187v1m1-191v1m0 187v2m1-3v1m1-188v1m0 185v1m1-2v1m1-2v1m1-2v1m1-2v1m1-2v1m1-187v1m0 184v1m1-204v1m0 201v1m1-2v1m1-186v1m0 183v1m1-186v1m0 182v2m1-3v1m1-184v1m0 181v1m1-2v1m1-183v1m0 180v1m1-183v1m0 180v1m1-2v1m1-2v1m1-227v1m0 3v5m0 36v1m0 179v1m1-225v1m0 1v1m0 5v1m0 214v1m1-2v1m1-2v1m1-212v3m0 1v2m0 204v1m1-3v2m1-3v1m1-218v1m0 1v1m0 5v1m0 207v1m1-218v1m0 3v5m0 207v1m1-2v1m1-293v3m0 288v1m1-293v1m0 3v1m0 286v1m1-2v1m1-2v1m1-2v1m1-2v1m1-2v1m1-287v1m0 3v1m0 279v2m1-285v3m0 279v1m1-2v1m1-2v1m1-2v1m1-2v1m1-2v1m1-2v1m1-2v1m1-2v1m1-2v1m1-2v1m1-3v2m1-3v1m1-2v1m1-2v1m1-2v1m1-2v1m1-2v1m1-2v1m1-2v1m1-2v1m1-2v1m1-2v1m1-3v2m1-3v1m1-2v1m1-2v1m1-2v1m1-2v1m1-2v1m1-2v1m1-2v1m2-3v1m1-2v1m1-3v2m1-3v1m1-2v1m1-2v1m1-2v1m1-2v1m1-2v1m1-2v1m1-2v1m1-2v1m1-2v1m1-2v1m1-3v2m1-3v1m1-2v1m1-2v1m1-2v1m1-2v1m1-2v1m1-2v1m1-2v1m1-2v1m1-2v1m1-2v1m1-3v2m1-3v1m2-3v1m1-2v1m1-2v1m0 104v1m21 4v1m0 9v1m1-10v1m0 7v1m1-8v4m0 1v2m2 4v3m2-12v2m0 1v5m2 1v3m2-14v4m0 1v2m1-8v1m0 7v1m1-10v1m0 9v1m10 98v1m0 15v1m1-16v1m0 13v1m3-13v11m6-11v11m3-13v1m0 13v1m1-16v1m0 15v1m252-366v2m0 40v1m0 1v2m0 41v1m1-86v1m0 79v1m0 3v1m0 92v1m0 4v1m1-102v1m0 1v1m0 43v1m0 1v3m0 6v3m0 37v2m0 1v1m1-184v3m0 41v2m0 38v1m0 101v1m1-184v5m0 75v1m0 1v1m0 49v1m0 1v1m0 6v1m0 1v2m0 33v1m0 1v3m0 1v1m1-188v3m0 39v2m0 38v1m0 3v1m0 99v1m1-106v1m0 47v1m0 1v3m0 6v3m0 37v2m0 1v1m1-182v1m0 176v1m0 4v1m1-185v2m0 40v2m0 1v1m0 35v1"/>
<path stroke="#ffff00" d="M38 225v1m2-3v1m0 1v7m1 0v1m1 0v5m1-6v1m1-6v5m1-6v1m1-4v1m0 1v1m1 0v1m1-2v1m0 1v1m1-4v1m0 3v1m1 0v1m1 0v1m1-2v1m0 1v1m0 7v1m1-16v1m0 3v1m0 3v1m0 5v1m1-14v3m0 5v5m101 61v1m0 1v1m0 1v1m94-188v1m0 1v15m2-15v1m1 0v1m1 0v13m1-14v1m1-2v1m0 43v1m2-47v1m0 1v15m1 28v1m2-45v15m1 28v1m3-7v1m0 5v1m1-44v2m0 11v2m74 29v1m2-1v1m6 2v1m14 379v1m0 7v5m1-12v2m0 3v2m0 5v2m10-14v2m0 3v2m0 5v2m1-15v1m0 7v5m35-360v1m20-30v2m0 1v5m0 1v6m3-8v1m3 4v3m1-8v1m0 3v1m0 3v1m1-8v3m0 5v1m0 72v1m1 1v1m0 1v1m39-156v1m1 0v1m1 0v13m1-14v1m1-2v1m1 0v1m1 0v13m1-14v1m1-2v1m1 0v1m1 0v3m0 1v7m0 3v1m1-4v1m0 1v1m1-12v1m0 9v1m1-2v1m0 1v1m1-14v1m0 1v9m0 3v1m254-7v1m0 7v1m0 34v1m0 1v2m0 33v1m1-80v1m0 5v1m0 73v7m1-86v2m0 1v2m0 73v1m1-36v2m0 34v7m0 92v1m0 1v2m0 1v3m1-108v1m1-38v2m0 36v7m1-86v2m0 1v2m0 179v2m1-187v1m0 5v1m0 176v2m0 2v1m1-189v1m0 7v1m0 34v2m0 1v1m0 39v2"/>
<path stroke="#0000ff" d="M106 476v1m0 15v1m1-16v1m0 13v1m1-14v1m0 11v1m1-12v2m0 7v2m1-9v3m0 1v3m4-180v1m0 11v1m1-14v1m0 1v1m0 9v1m0 1v1m1-12v1m0 7v1m1-8v2m0 3v2m1-5v3m0 165v3m0 1v3m1-9v2m0 7v2m1-12v1m0 11v1m1-14v1m0 13v1m1-16v1m0 15v1m1-185v1m0 11v1m1-12v1m0 9v1m1-10v2m0 5v2m1-7v5m23-12v1m74-268v1m1 0v1m1 0v13m1-14v1m1-2v1m1 0v1m1 0v13m1-14v1m1-2v1m1 0v1m1 0v13m1 0v1m3-1v1m1-5v1m0 1v2m95 63v2m0 1v2m1 0v2m4 32v1m1-40v2m0 1v5m0 1v3m0 1v4m5-12v2m1-7v2m0 1v2m97 133v1m21-21v5m1 0v2m3-6v3m2 5v3m0 1v4m2-16v3m3 1v2m1-7v5m69 125v1m0 3v3m1-8v1m0 3v1m0 3v1m1-10v1m3 4v1m0 3v1m0 1v1m1-6v3m4-7v3m1-6v1m0 1v1m0 3v1m3 4v1m1-10v1m0 3v1m0 3v1m1-8v3m0 3v1m184-195v1m1-41v1m0 3v3m0 34v7m0 32v1m0 1v3m0 26v1m0 5v1m0 62v1m0 1v1m0 7v3m1-192v1m0 1v1m0 3v1m0 32v1m0 44v3m0 24v1m0 3v1m0 66v1m0 9v1m1-153v7m0 34v3m0 28v3m0 75v1m1-152v1m0 39v1m0 99v1m0 1v2m0 1v1m0 1v2m0 1v1m0 1v1m0 2v1m0 1v2m1-158v1m0 1v4m0 1v1m0 33v1m0 108v1m1-191v1m0 1v1m0 3v1m0 39v1m0 64v1m0 3v1m0 66v1m0 9v1m1-194v1m0 3v3m0 34v1m0 1v4m0 1v1m0 35v1m0 3v1m0 24v3m0 64v1m0 1v1m0 7v3m1-112v2m0 2v3"/>
<path stroke="#00ffff" d="M157 281v1m2-3v1m1-3v1m2-3v1m1-3v1m2-3v1m2-3v1m1-3v1m2-3v1m1-3v1m2-3v1m2-3v1m1-3v1m2-3v1m2-3v1m1-3v1m2-3v1m1-3v1m2-3v1m2-3v1m1-3v1m2-3v1m1-3v1m2-3v1m2-3v1m1-3v1m2-3v1m1-3v1m2-3v1m2-3v1m1-3v1m2-3v1m2-3v1m1-3v1m2-3v1m1-3v1m2-3v1m2-3v1m1-3v1m2-3v1m1-3v1m2-3v1m2-3v1m1-3v1m2-3v1m1-3v1m2-3v1m2-3v1m1-3v1m2-3v1m2-3v1m1-3v1m2-3v1m1-3v1m2-3v1m2-3v1m1-3v1m2-3v1m1-3v1m88-5v1m1 0v1m1-2v1m0 1v1m1-2v1m0 1v1m1-2v1m0 1v1m1-2v1m0 1v1m1-2v1m0 1v1m1-2v1m0 1v1m1-2v1m0 1v1m1-2v1m1 0v1m0 1v1m1-2v1m0 1v1m1-2v1m0 1v1m1-2v1m1 0v1m10 12v1m1 0v1m1-2v1m0 1v1m1-2v1m0 1v1m1 0v1m1-2v1m0 1v1m1-2v1m0 1v1m1 0v1m1-2v1m0 1v1m1-2v1m0 1v1m1 0v1m1-2v1m0 1v1m1-2v1m0 1v1m1 0v1m1-2v1m1 0v1m2 0v1m6 5v1m2 1v1m1 0v1m1 0v1m2 0v2m4 3v1m2 0v2m4 3v1m0 2v1m1 0v1m1-4v2m0 2v1m1 0v1m1 0v1m1 0v1m1-3v1m0 2v1m1 0v1m1-4v2m0 2v1m1 0v1m1 0v1m1 0v1m1-3v1m0 2v1m2-3v2m4 3v1m2 0v1m2 1v1m1 0v1m1 0v1m1 5v1m1-5v1m0 4v1m1 0v1m1-5v1m0 4v1m1-5v1m0 4v1m1-5v1m0 4v1m1 0v1m1-5v1m0 4v1m1 0v1m1 0v1m1-5v1m0 4v1m1 0v1m1 0v1"/>
<path stroke="#008080" d="M251 480v1m1-2v1m0 1v1m1-12v5m0 7v1m1-14v1m0 5v1m0 5v1m1-14v1m0 7v2m0 1v2m1-14v1m6-1v1m1 0v1m0 7v2m0 1v2m1-12v1m0 5v1m0 5v1m1-12v5m0 7v1m1-38v1m0 33v1m0 1v1m1-2v1m477-138v1m1-6v3m0 3v1m1-8v1m0 3v1m0 1v1m4-7v1m0 3v1m0 1v1m1-6v3m0 3v1m1-2v1"/>
</g>
<g class="d" fill="#fff" filter="url(#dred)">
<text transform="translate(97 370) scale(.8 1)" x="0">1</text>
<text transform="translate(460 434) scale(.8 1)" x="0">5</text>
<text transform="translate(302 94) scale(.8 1)" x="0">9</text>
</g>
<g class="d" fill="#fff" filter="url(#dyellow)">
<text transform="translate(176 475) scale(.8 1)" x="0">2</text>
<text transform="translate(500 351) scale(.8 1)" x="0">6</text>
<text transform="translate(198 116) scale(.8 1)" x="0 10">10</text>
</g>
<g class="d" fill="#fff" filter="url(#dgreen)">
<text transform="translate(290 514) scale(.8 1)" x="0">3</text>
<text transform="translate(495 238) scale(.8 1)" x="0">7</text>
<text transform="translate(128 174) scale(.8 1)" x="0 10">11</text>
</g>
<g class="d" fill="#fff" filter="url(#dblue)">
<text transform="translate(390 492) scale(.8 1)" x="0">4</text>
<text transform="translate(416 133) scale(.8 1)" x="0">8</text>
<text transform="translate(88 257) scale(.8 1)" x="0 10">12</text>
</g>
<g class="t" fill="#fff" filter="url(#twhite)">
<text xml:space="preserve" x="605.75 611.75 617.25 623.5 629.25 635.25 641.25 647.5 653.25 659.25 665.25 671.25 677.25" y="14">Astrolog 5.40</text>
<text xml:space="preserve" x="683.25" y="264">R</text>
<text xml:space="preserve" x="683.25" y="344">R</text>
</g>
<g class="t" fill="#fff" filter="url(#tlite)">
<text xml:space="preserve" x="605.25 611.5 617.5 623.25 629.25 635.25" y="24">&quot;null&quot;</text>
<text xml:space="preserve" x="605.25 611 617.25 623.25 629.25 635.25 641.25 647.25 653 659.25 665.5 671.25 677 683.5 689.25 695 701.5 707.25 713.5" y="34">Sat October 1, 1949</text>
<text xml:space="preserve" x="605.25 611.5 617.25 623.25 629.25 635 641.25 647.25 653 659.25 665.25 671.25 677.25 683.25 689.25 695.25 701.25 707.25 713.25 719.25 725.25 731.5" y="44"> 2:00pm (ST +8:00 GMT)</text>
<text xml:space="preserve" x="605.25 611.25" y="54">&quot;&quot;</text>
<text xml:space="preserve" x="605 611.5 617 623.25 629.5 635.25 641.25 647.25 653.5 659.5 665.25 671.25 677.25 683.25" y="64">121°30E 23°00N</text>
<text xml:space="preserve" x="605.25 611.25 617 623.25 629.25 635.5 641.5 647.75 653.25 659 665.25 671.5 677.75 683.25 689.75 695.25" y="74">Placidus houses.</text>
<text xml:space="preserve" x="605.25 611.5 617.25 623 629.25 635.25 641 647.25 653.5 659.25 665.25 671.25 677.25 683.25 689.25 695.5 701.25 707.5 713.25 719.25 725.25" y="84">Tropical, Geocentric.</text>
<text xml:space="preserve" x="605 611.5 617.25 623.25 629 635.5 641.25 647.25 653 659.25 665.25 671.25 677.25 683.5 689.25 695.5 701.5 707 713.5 719.25 725.25 731.75 737.25 743.25 749.25" y="94">Julian Day = 2433190.7500</text>
<text xml:space="preserve" x="695.25 701.25 707.25 713.25 719.25 725.25 731.25" y="244">- 0°00&#x27;</text>
<text xml:space="preserve" x="695.25 701.25 707.25 713.25 719.25 725.25 731.25" y="254">- 5°06&#x27;</text>
<text xml:space="preserve" x="695.25 701.25 707.5 713.25 719.25 725.25 731.25" y="264">- 2°56&#x27;</text>
<text xml:space="preserve" x="695.25 701.25 707 713.25 719.5 725.25 731.25" y="274">- 1°30&#x27;</text>
<text xml:space="preserve" x="695.25 701.25 707 713.25 719 725.25 731.25" y="284">+ 1°14&#x27;</text>
<text xml:space="preserve" x="695.25 701.25 707.25 713.25 719.5 725.25 731.25" y="294">- 0°34&#x27;</text>
<text xml:space="preserve" x="695.25 701.25 707 713.25 719.25 725.25 731.25" y="304">+ 1°40&#x27;</text>
<text xml:space="preserve" x="695.25 701.25 707.25 713.25 719 725.25 731.25" y="314">+ 0°15&#x27;</text>
<text xml:space="preserve" x="695.25 701.25 707 713.25 719.5 725.5 731.25" y="324">+ 1°32&#x27;</text>
<text xml:space="preserve" x="695.25 701.25 707.75 713.25 719.25 725.75 731.25" y="334">+ 7°47&#x27;</text>
<text xml:space="preserve" x="695.25 701.25 707.25 713.25 719.25 725.25 731.25" y="344">+ 0°00&#x27;</text>
<text xml:space="preserve" x="605 611.25 617.5 623.25 629.25 635.25 641.5 647.5 653.25 659.25 665 671.5 677.25 683 689.25 695.25 701.5 707.5" y="364">Fire: 3, Earth: 3,</text>
<text xml:space="preserve" x="605.75 611.25 617.5 623.25 629.25 635.25 641.25 647.5 653.25 659.75 665 671.25 677.25 683.5 689.25 695.25 701.5" y="374">Air : 4, Water: 3</text>
<text xml:space="preserve" x="605.25 611 617.5 623.25 629.25 635.75 641.5 647.25 653 659.25 665.25 671.25 677.25 683.25 689.5 695.25 701.25 707.5 713.25 719.25 725.25 731" y="384">Car: 7, Fix: 5, Mut: 1</text>
<text xml:space="preserve" x="605.25 611 617.5 623.5 629.25 635.25 641.75 647.5 653.25 659.25 665.25 671.5 677.25 683.25 689.25" y="394">Yang: 7, Yin: 6</text>
<text xml:space="preserve" x="605.25 611.25 617.25 623.25 629.5 635.25 641.25 647.25 653.25 659.5 665.5 671.25 677.75 683.25 689.25 695.25 701.5 707.25 713.25 719.25 725.25 731.75" y="404">M: 8, N: 3, A: 4, D: 7</text>
<text xml:space="preserve" x="605.75 611.5 617.5 623.25 629.25 635.25 641.5 647.25 653.25 659.5 665.25 671.25 677.25 683.5 689.5 695.25 701.25 707 713.5 719.25 725.25 731.25" y="414">Ang: 4, Suc: 2, Cad: 5</text>
<text xml:space="preserve" x="605.75 611.25 617 623.5 629.5 635.25 641.25 647.25 653.5 659.25 665.25 671 677 683.5 689.25 695.25 701.25 707.25" y="424">Learn: 5, Share: 8</text>
</g>
<g class="t" fill="#fff" filter="url(#tred)">
<text xml:space="preserve" x="605.25 611 617.75 623.25 629.25 635 641.25 647.5 653.75 659.25 665.25" y="114"> 1st house:</text>
<text xml:space="preserve" x="677 683.5 689.75 695.5 701.25 707.25 713.25" y="134">12Ari54</text>
<text xml:space="preserve" x="605.25 611.25 617.25 623 629.25 635 641.25 647.5 653.75 659.25 665.25" y="154"> 5th house:</text>
<text xml:space="preserve" x="605.25 611.5 617.25 623 629.25 635 641.25 647.5 653.75 659.25 665.25" y="194"> 9th house:</text>
<text xml:space="preserve" x="677.25 683.5 689.25 695 701.5 707.5 713.5" y="214"> 9Sag32</text>
<text xml:space="preserve" x="605.25 611.25 617.5 623.5 629.25" y="244"> Sun:</text>
<text xml:space="preserve" x="605.25 611 617.5 623.75 629.25" y="284">Mars:</text>
<text xml:space="preserve" x="641 647.25 653.75 659.25 665.25 671.25 677.5" y="284">14Leo52</text>
<text xml:space="preserve" x="605 611.5 617 623.25 629.25" y="294">Jupi:</text>
<text xml:space="preserve" x="641 647.75 653.75 659.25 665.25 671.5 677.5" y="334">17Leo39</text>
<text xml:space="preserve" x="641 647.25 653.75 659.5 665.25 671.25 677.25" y="344">16Ari58</text>
</g>
<g class="t" fill="#fff" filter="url(#tyellow)">
<text xml:space="preserve" x="677.25 683.25 689.75 695.5 701.5 707.25 713.25" y="114"> 0Aqu00</text>
<text xml:space="preserve" x="605.25 611.5 617.5 623.5 629.25 635 641.25 647.5 653.75 659.25 665.25" y="124"> 2nd house:</text>
<text xml:space="preserve" x="677 683.5 689.25 695 701.5 707.5 713.25" y="144">13Tau36</text>
<text xml:space="preserve" x="605.25 611.25 617.25 623 629.25 635 641.25 647.5 653.75 659.25 665.25" y="164"> 6th house:</text>
<text xml:space="preserve" x="677.25 683.25 689 695.25 701.5 707.25 713.25" y="184"> 6Vir50</text>
<text xml:space="preserve" x="605 611.25 617.25 623 629.25 635 641.25 647.5 653.75 659.25 665.25" y="204">10th house:</text>
<text xml:space="preserve" x="677.25 683.5 689.25 695 701 707.25 713.25" y="224"> 3Cap45</text>
<text xml:space="preserve" x="641.5 647.5 653.25 659 665 671.5 677.25" y="294">22Cap35</text>
<text xml:space="preserve" x="605.25 611 617.25 623.5 629.25" y="304">Satu:</text>
<text xml:space="preserve" x="641 647.5 653 659.25 665.5 671.25 677.25" y="304">13Vir08</text>
</g>
<g class="t" fill="#fff" filter="url(#tblue)">
<text xml:space="preserve" x="677.25 683.25 689.25 695.25 701.75 707.25 713.25" y="124"> 6Pis50</text>
<text xml:space="preserve" x="605.25 611.25 617.25 623 629.25 635 641.25 647.5 653.75 659.25 665.25" y="144"> 4th house:</text>
<text xml:space="preserve" x="677.25 683.5 689.25 695 701.5 707.25 713.25" y="164"> 3Can45</text>
<text xml:space="preserve" x="677.25 683.25 689.75 695.25 701.25 707.25 713.25" y="174"> 0Leo00</text>
<text xml:space="preserve" x="605.25 611.25 617.25 623 629.25 635 641.25 647.5 653.75 659.25 665.25" y="184"> 8th house:</text>
<text xml:space="preserve" x="677 683.5 689.25 695.25 701.25 707.5 713.25" y="204">13Sco36</text>
<text xml:space="preserve" x="605 611.5 617.25 623 629.25 635 641.25 647.5 653.75 659.25 665.25" y="224">12th house:</text>
<text xml:space="preserve" x="605.25 611.25 617.25 623.5 629.25" y="254">Moon:</text>
<text xml:space="preserve" x="641 647.5 653.25 659.25 665.25 671.5 677.5" y="274">19Sco23</text>
<text xml:space="preserve" x="641.25 647.25 653.25 659 665.5 671.25 677.5" y="314"> 4Can59</text>
<text xml:space="preserve" x="605.25 611.25 617 623.25 629.25" y="324">Nept:</text>
<text xml:space="preserve" x="605.25 611.25 617.5 623.25 629.25" y="334">Plut:</text>
</g>
<g class="t" fill="#fff" filter="url(#tgreen)">
<text xml:space="preserve" x="605.25 611.5 617.5 623.5 629.25 635 641.25 647.5 653.75 659.25 665.25" y="134"> 3rd house:</text>
<text xml:space="preserve" x="677.25 683.5 689.25 695.25 701.25 707.5 713.5" y="154"> 9Gem32</text>
<text xml:space="preserve" x="605.25 611.75 617.25 623 629.25 635 641.25 647.5 653.75 659.25 665.25" y="174"> 7th house:</text>
<text xml:space="preserve" x="677 683.5 689.75 695.25 701 707.25 713.25" y="194">12Lib54</text>
<text xml:space="preserve" x="605 611 617.25 623 629.25 635 641.25 647.5 653.75 659.25 665.25" y="214">11th house:</text>
<text xml:space="preserve" x="641.25 647.75 653.75 659.25 665 671.25 677.25" y="244"> 7Lib44</text>
<text xml:space="preserve" x="641.25 647.5 653.75 659.5 665.5 671.5 677.5" y="254"> 2Aqu32</text>
<text xml:space="preserve" x="605.25 611.25 617.5 623.25 629.25" y="264">Merc:</text>
<text xml:space="preserve" x="641 647.5 653.75 659.25 665 671 677.25" y="264">13Lib14</text>
<text xml:space="preserve" x="605 611.25 617.5 623.5 629.25" y="274">Venu:</text>
<text xml:space="preserve" x="605.25 611.5 617 623.5 629.25" y="314">Uran:</text>
<text xml:space="preserve" x="641 647.25 653.75 659.25 665 671.5 677.5" y="324">14Lib39</text>
</g>
<g class="t" fill="#fff" filter="url(#tdkcyan)">
<text xml:space="preserve" x="605.25 611.25 617.5 623.25 629.25" y="344">Node:</text>
</g>
</svg></body></html>
